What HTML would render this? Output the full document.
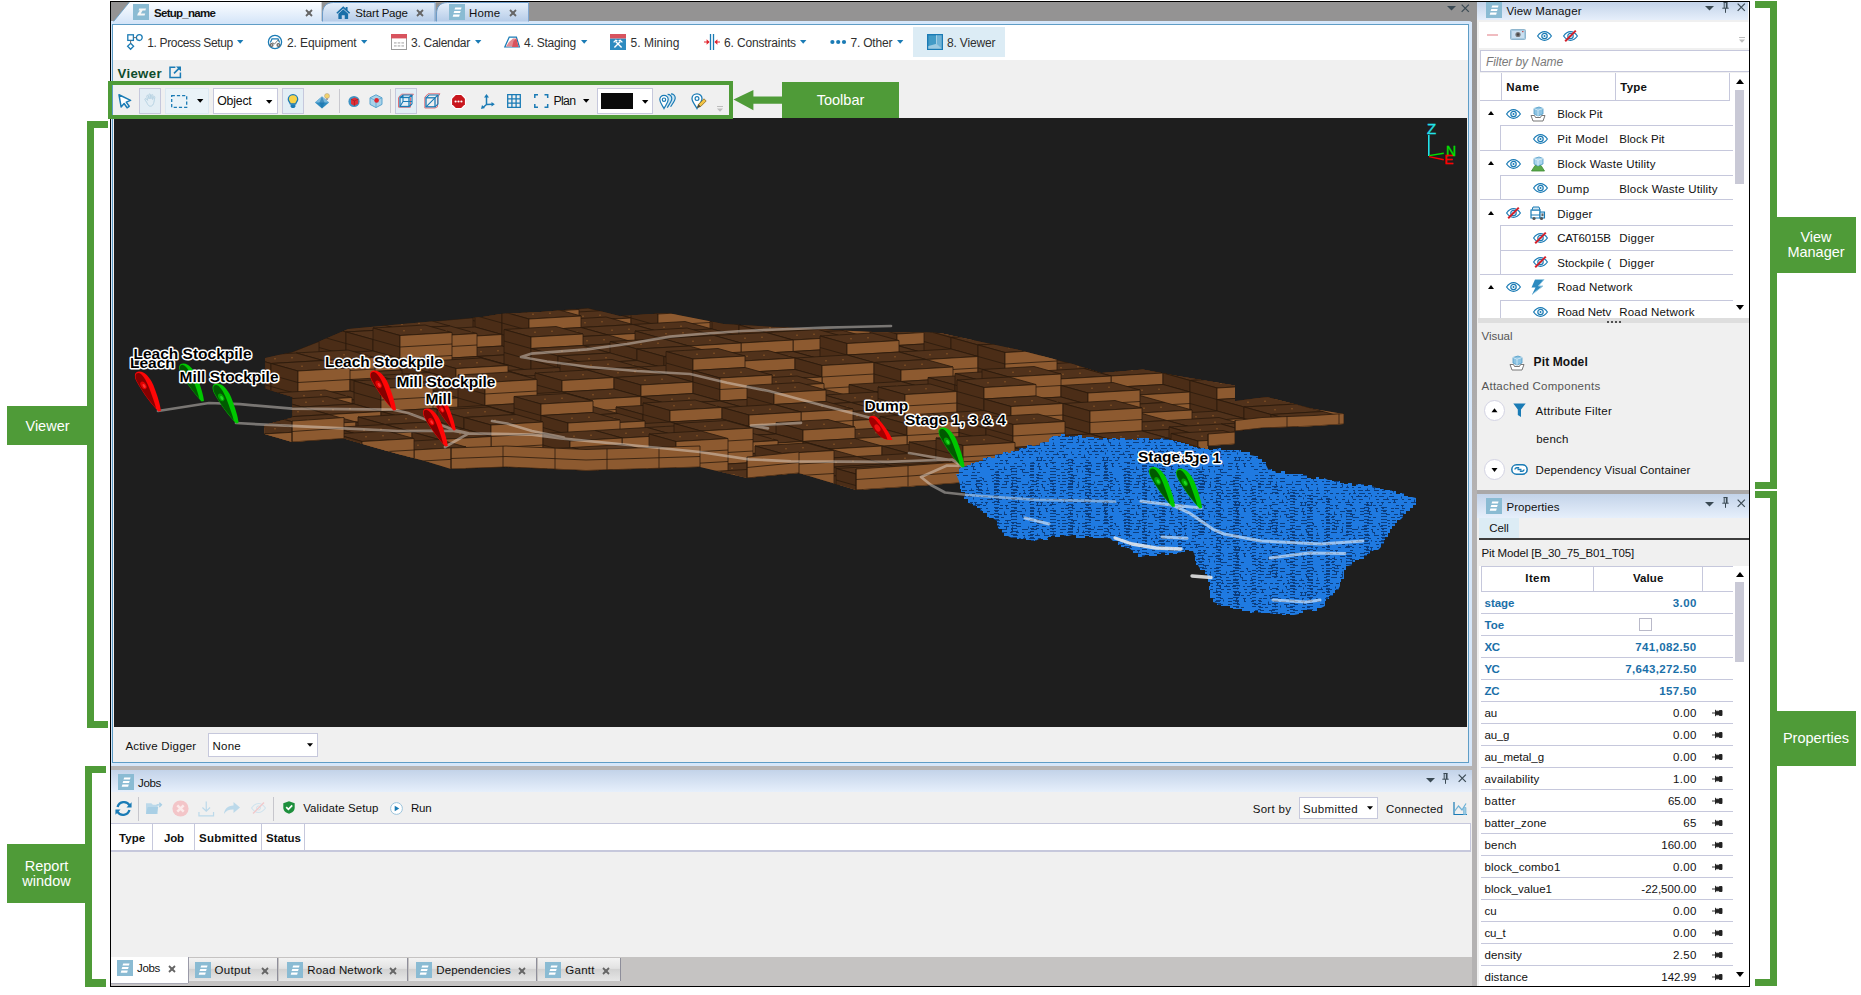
<!DOCTYPE html>
<html><head><meta charset="utf-8"><title>Viewer</title>
<style>
*{box-sizing:border-box;margin:0;padding:0}
html,body{width:1861px;height:995px;overflow:hidden;background:#fff}
body{position:relative;font:11.5px "Liberation Sans",sans-serif;color:#101010}
.a,.a>*{position:absolute}
.t{white-space:nowrap;line-height:14px;height:14px}
.b{font-weight:700;letter-spacing:-.55px}
.g{background:#4f9b38}
.lbl{background:#4f9b38;color:#fff;font-size:14.5px;line-height:15px;text-align:center;display:flex;align-items:center;justify-content:center;white-space:nowrap}
.hd{background:linear-gradient(#c3d3e9,#e6effb)}
svg{position:absolute;overflow:visible}
.ic{background:#8abbd3}
</style></head><body>

<!-- ============ APP FRAME ============ -->
<div class="a" id="app" style="left:0;top:0;width:1861px;height:995px">
<div style="left:110px;top:1px;width:1640px;height:986px;background:#000"></div>
<div style="left:111px;top:2px;width:1638px;height:984px;background:#f0f0f0"></div>
<!-- doc tab strip -->
<div style="left:111px;top:2px;width:1366px;height:20px;background:#949393"></div>
<!-- vertical gray splitter -->
<div style="left:1472px;top:2px;width:5px;height:984px;background:linear-gradient(#949393,#949393 6%,#b4b2b2 50%)"></div>
<!-- doc frame -->
<div style="left:111px;top:21px;width:1361px;height:745px;background:#d6e7fa;border-radius:0 3px 0 0"></div>
<div style="left:112px;top:24px;width:1357px;height:739px;background:#5f9dc6"></div>
<div style="left:113px;top:25px;width:1355px;height:737px;background:#f0f0f0"></div>
<!-- menu bar white -->
<div style="left:113px;top:25px;width:1355px;height:35px;background:#fff"></div>
<!-- 3D view -->
<div style="left:114px;top:118px;width:1353px;height:609px;background:#1e1e1e"></div>
<!-- horizontal splitter under doc -->
<div style="left:111px;top:766px;width:1361px;height:4px;background:#b6b4b4"></div>
</div>

<!--VIEW3D-->
<div class="a" id="v3d" style="left:0;top:0">
<svg style="left:114px;top:118px" width="1353" height="609" viewBox="114 118 1353 609">
<defs>
<clipPath id="cp"><polygon points="265,358 292,352 320,341 348,329 402,324 482,317 500,314 540,312 588,308 620,316 668,313 724,324 775,327 873,332 940,333 1019,350 1073,364 1101,373 1143,369.5 1178,376 1235,385.5 1235,401 1267,397 1314,409 1344,414 1344,424 1314,426 1262,428 1235,431 1235,444 1208,446 1208,470 1000,480 957,483 910,486.5 856,490 799,473 747,478 700,467 586,470.5 506,467 451,469 425,461 398,454 371,446.5 344,438.5 292,442 264.5,434 264.5,425 292.5,417.5 292.5,397 265.4,388.7"/></clipPath>
<clipPath id="cb"><polygon points="956,474 959,474 959,469 963,466 967,466 967,465 971,465 971,463 975,463 975,462 979,462 979,461 983,461 983,458 987,458 987,457 991,457 991,458 995,458 995,455 999,454 1003,454 1003,452 1008,452 1008,453 1011,453 1011,451 1016,451 1016,451 1019,451 1019,448 1024,448 1024,448 1027,448 1027,445 1032,445 1032,446 1036,446 1036,445 1040,445 1040,443 1044,442 1049,442 1049,439 1053,436 1057,436 1057,436 1061,436 1061,434 1065,434 1065,437 1069,437 1069,436 1074,436 1074,436 1078,436 1078,435 1082,435 1082,438 1086,438 1086,437 1090,437 1094,437 1094,438 1099,438 1099,439 1103,439 1103,438 1107,438 1107,439 1112,439 1112,438 1116,438 1116,439 1120,439 1120,438 1125,438 1125,440 1129,439 1133,439 1133,440 1137,440 1137,438 1141,438 1141,438 1145,438 1145,438 1149,438 1149,440 1153,440 1153,439 1157,439 1157,439 1161,439 1161,438 1165,439 1169,439 1169,440 1173,440 1173,441 1177,441 1177,442 1181,442 1181,443 1185,443 1185,444 1189,444 1189,446 1193,446 1193,447 1197,447 1197,448 1201,448 1205,448 1205,449 1209,449 1209,450 1213,450 1213,449 1217,449 1217,448 1221,448 1221,450 1225,450 1225,450 1229,450 1229,450 1233,450 1233,450 1237,450 1241,450 1241,452 1246,452 1246,452 1250,452 1250,455 1255,456 1258,456 1258,459 1262,459 1262,462 1266,462 1266,465 1268,469 1272,469 1272,471 1276,471 1276,473 1281,473 1281,471 1285,471 1285,474 1290,474 1294,474 1294,474 1299,474 1299,474 1303,474 1303,475 1307,475 1307,478 1311,478 1311,479 1316,479 1316,477 1319,477 1319,479 1324,479 1324,478 1328,480 1332,480 1332,481 1336,481 1336,481 1340,481 1340,483 1344,483 1344,484 1348,484 1348,483 1352,483 1352,486 1356,486 1356,484 1360,484 1360,484 1364,484 1364,486 1368,486 1368,485 1372,485 1372,486 1376,488 1380,488 1380,489 1384,489 1384,490 1388,490 1388,490 1392,490 1392,491 1396,491 1396,494 1400,494 1400,493 1404,493 1404,496 1408,496 1408,497 1412,497 1412,497 1416,498 1416,505 1413,505 1413,508 1410,508 1410,511 1406,511 1406,514 1403,514 1403,517 1400,520 1397,520 1397,523 1395,523 1395,526 1392,526 1392,529 1390,529 1390,533 1388,533 1388,537 1385,537 1385,540 1384,540 1384,544 1381,544 1381,547 1378,550 1374,550 1374,551 1370,551 1370,554 1367,554 1367,556 1364,556 1364,559 1359,559 1359,560 1355,560 1355,562 1352,562 1352,565 1348,566 1346,566 1346,570 1344,570 1344,574 1344,574 1344,579 1341,579 1341,582 1340,582 1340,586 1338,590 1335,590 1335,593 1333,593 1333,596 1329,596 1329,599 1326,599 1326,601 1325,601 1325,606 1321,608 1317,608 1317,611 1312,611 1312,610 1307,610 1307,610 1303,610 1303,613 1299,613 1299,614 1294,615 1290,615 1290,614 1286,614 1286,615 1282,615 1282,614 1278,614 1278,614 1274,614 1274,614 1270,614 1270,613 1266,613 1266,613 1262,613 1262,613 1258,613 1258,611 1254,611 1254,613 1250,613 1250,611 1246,611 1242,611 1242,609 1238,609 1238,609 1233,609 1233,608 1230,608 1230,606 1225,606 1225,606 1221,606 1221,605 1217,605 1217,603 1213,602 1213,602 1213,598 1210,598 1210,594 1210,594 1210,590 1209,590 1209,586 1210,586 1210,582 1208,582 1208,578 1207,574 1205,574 1205,570 1200,570 1200,569 1198,565 1196,565 1196,561 1195,561 1195,556 1193,551 1189,551 1189,550 1185,550 1185,552 1181,552 1181,553 1177,553 1177,554 1173,554 1173,553 1169,553 1169,555 1165,555 1165,553 1161,553 1161,554 1157,554 1157,556 1153,556 1153,556 1149,556 1149,555 1145,555 1145,556 1141,557 1138,557 1138,553 1133,553 1133,551 1129,548 1125,548 1125,547 1121,547 1121,545 1118,545 1118,541 1113,541 1113,541 1110,538 1106,538 1106,538 1102,538 1102,538 1097,538 1097,538 1093,538 1093,537 1089,537 1089,536 1085,536 1085,538 1081,538 1081,538 1076,538 1076,535 1072,535 1072,535 1068,536 1064,536 1064,535 1060,535 1060,537 1055,537 1055,536 1051,536 1051,537 1048,537 1048,540 1043,540 1043,539 1039,539 1039,539 1035,541 1031,541 1031,540 1026,540 1026,539 1021,539 1021,539 1017,539 1017,538 1012,538 1012,538 1008,536 1004,536 1004,533 1002,533 1002,529 998,529 998,526 997,526 997,521 993,518 989,518 989,517 987,517 987,513 983,513 983,511 980,511 980,508 977,508 977,506 973,506 973,504 969,503 968,503 968,499 964,499 964,496 965,496 965,492 961,492 961,489 960,489 960,485 959,481"/></clipPath>
<pattern id="pt" width="66" height="45" patternUnits="userSpaceOnUse"><rect width="66" height="45" fill="#1f7ae1"/><path d="M3 1.5h5M15.5 1.5v2M23 1.5h2M31 1.5h2M32.5 1.5v2M36 1.5h6M38.5 1.5v-2M44 1.5h4M45.5 1.5v-2M51.5 1.5v-2M55 1.5h2M59 1.5h5M0 4.5h3M1.5 4.5v-2M6 4.5h6M8.5 4.5v3M16 4.5h2M22 4.5h3M28.5 4.5v3M33 4.5h3M39 4.5h4M49.5 4.5v-2M56 4.5h3M63 4.5h6M2 7.5h3M7 7.5h3M18 7.5h3M25 7.5h5M32 7.5h2M39 7.5h2M46 7.5h3M47.5 7.5v3M50 7.5h3M51.5 7.5v3M57 7.5h2M61 7.5h3M62.5 7.5v2M10 10.5h3M15 10.5h3M16.5 10.5v2M30 10.5h3M46 10.5h6M53 10.5h3M59 10.5h3M5 13.5h3M9 13.5h4M16 13.5h3M24 13.5h3M32 13.5h3M40 13.5h5M48 13.5h2M48.5 13.5v2M55 13.5h3M56.5 13.5v3M62 13.5h2M5 16.5h3M14.5 16.5v3M20 16.5h5M27 16.5h5M35.5 16.5v-2M40 16.5h4M47 16.5h4M49.5 16.5v3M56 16.5h2M63 16.5h6M0 19.5h4M8 19.5h4M14 19.5h3M20 19.5h2M30 19.5h5M32.5 19.5v3M40 19.5h4M49 19.5h3M5 22.5h4M11 22.5h3M21.5 22.5v-2M26.5 22.5v-2M33 22.5h6M48 22.5h3M53 22.5h3M1 25.5h3M6 25.5h4M15 25.5h6M17.5 25.5v2M33 25.5h2M39 25.5h5M47 25.5h6M2 28.5h2M6 28.5h6M14 28.5h5M22 28.5h2M26 28.5h5M47 28.5h6M58 28.5h2M59.5 28.5v2M2 31.5h2M6 31.5h4M14 31.5h5M16.5 31.5v3M22.5 31.5v2M26 31.5h5M38.5 31.5v2M42 31.5h5M52 31.5h4M60 31.5h3M4 34.5h6M12 34.5h5M21 34.5h2M22.5 34.5v3M32 34.5h6M41 34.5h6M51 34.5h2M52.5 34.5v3M57 34.5h2M62 34.5h2M4 37.5h3M11 37.5h6M20 37.5h2M26 37.5h3M27.5 37.5v-2M32 37.5h2M38 37.5h3M53 37.5h2M54.5 37.5v2M63.5 37.5v2M4 40.5h6M7.5 40.5v2M23 40.5h5M33 40.5h2M38 40.5h5M45 40.5h5M47.5 40.5v-2M54 40.5h5M62 40.5h3M4 43.5h2M10 43.5h3M16 43.5h3M21 43.5h4M29 43.5h2M29.5 43.5v2M33 43.5h3M34.5 43.5v-2M39 43.5h6M48 43.5h3M57 43.5h2M62 43.5h4" stroke="#0a3875" stroke-width="1" fill="none" opacity=".9"/></pattern>
<pattern id="pt2" width="74" height="42" patternUnits="userSpaceOnUse"><path d="M0 12.5h3M0 15.5h3M0 18.5h3M0 21.5h3M0 24.5h3M14 0.5h6M14 6.5h6M14 9.5h6M14 12.5h6M14 15.5h6M14 18.5h6M14 21.5h6M14 24.5h6M14 27.5h6M14 30.5h6M32 0.5h5M32 3.5h5M32 6.5h5M32 9.5h5M32 12.5h5M32 15.5h5M32 18.5h5M32 21.5h5M32 24.5h5M32 27.5h5M32 30.5h5M32 33.5h5M32 36.5h5M32 39.5h5M49 0.5h6M49 3.5h6M49 6.5h6M49 9.5h6M49 12.5h6M49 15.5h6M49 18.5h6M49 21.5h6M49 24.5h6M49 27.5h6M49 30.5h6M49 33.5h6M49 36.5h6M49 39.5h6M68 0.5h4M68 3.5h4M68 6.5h4M68 9.5h4M68 12.5h4M68 15.5h4M68 18.5h4M68 24.5h4M68 27.5h4M68 30.5h4M68 33.5h4M68 36.5h4M68 39.5h4" stroke="#0a3875" stroke-width="1" fill="none" opacity=".9"/></pattern>
</defs>
<style>.t{fill:#51321b}.s{fill:#4b2d17}.f{fill:#8d5a30}.d{stroke:#b87432;stroke-width:1}</style>
<g clip-path="url(#cp)" stroke="#2b1a0d" stroke-width=".8" stroke-linejoin="round"><polygon points="265,358 292,352 320,341 348,329 402,324 482,317 500,314 540,312 588,308 620,316 668,313 724,324 775,327 873,332 940,333 1019,350 1073,364 1101,373 1143,369.5 1178,376 1235,385.5 1235,401 1267,397 1314,409 1344,414 1344,424 1314,426 1262,428 1235,431 1235,444 1208,446 1208,470 1000,480 957,483 910,486.5 856,490 799,473 747,478 700,467 586,470.5 506,467 451,469 425,461 398,454 371,446.5 344,438.5 292,442 264.5,434 264.5,425 292.5,417.5 292.5,397 265.4,388.7" fill="#50321b"/><path class="t" d="M525 317.5l52 -3l27 7.5l-52 3z"/><path class="d" d="M555.5 320.2h1M572.5 319.2h1"/><path class="t" d="M473 309l52 -3l27 7.5l-52 3z"/><path class="d" d="M503.5 311.8h1M520.5 310.8h1"/><path class="s" d="M473 309l27 7.5v34.5l-27 -7.5zM473 320.5l27 7.5M473 332l27 7.5"/><path class="t" d="M604 310.5l52 -3l27 7.5l-52 3z"/><path class="d" d="M634.5 313.2h1M651.5 312.2h1"/><path class="t" d="M552 313.5l52 -3l27 7.5l-52 3z"/><path class="d" d="M582.5 316.2h1M599.5 315.2h1"/><path class="f" d="M579 321l52 -3v11.5l-52 3z"/><path class="t" d="M500 305l52 -3l27 7.5l-52 3z"/><path class="d" d="M530.5 307.8h1M547.5 306.8h1"/><path class="s" d="M500 305l27 7.5v23l-27 -7.5zM500 316.5l27 7.5"/><path class="f" d="M527 312.5l52 -3v23l-52 3zM527 324l52 -3"/><path class="t" d="M448 331l52 -3l27 7.5l-52 3z"/><path class="d" d="M478.5 333.8h1M495.5 332.8h1"/><path class="t" d="M396 334l52 -3l27 7.5l-52 3z"/><path class="d" d="M426.5 336.8h1M443.5 335.8h1"/><path class="s" d="M396 334l27 7.5v23l-27 -7.5zM396 345.5l27 7.5"/><path class="t" d="M787 320.5l52 -3l27 7.5l-52 3z"/><path class="d" d="M817.5 323.2h1M834.5 322.2h1"/><path class="s" d="M787 320.5l27 7.5v23l-27 -7.5zM787 332l27 7.5"/><path class="t" d="M631 306.5l52 -3l27 7.5l-52 3z"/><path class="d" d="M661.5 309.2h1M678.5 308.2h1"/><path class="s" d="M631 306.5l27 7.5v23l-27 -7.5zM631 318l27 7.5"/><path class="f" d="M658 314l52 -3v23l-52 3zM658 325.5l52 -3"/><path class="t" d="M579 332.5l52 -3l27 7.5l-52 3z"/><path class="d" d="M609.5 335.2h1M626.5 334.2h1"/><path class="t" d="M527 335.5l52 -3l27 7.5l-52 3z"/><path class="d" d="M557.5 338.2h1M574.5 337.2h1"/><path class="t" d="M475 304l52 -3l27 7.5l-52 3z"/><path class="d" d="M505.5 306.8h1M522.5 305.8h1"/><path class="s" d="M475 304l27 7.5v23l-27 -7.5zM475 315.5l27 7.5"/><path class="t" d="M423 330l52 -3l27 7.5l-52 3z"/><path class="d" d="M453.5 332.8h1M470.5 331.8h1"/><path class="f" d="M450 337.5l52 -3v11.5l-52 3z"/><path class="t" d="M371 321.5l52 -3l27 7.5l-52 3z"/><path class="d" d="M401.5 324.2h1M418.5 323.2h1"/><path class="t" d="M319 324.5l52 -3l27 7.5l-52 3z"/><path class="d" d="M349.5 327.2h1M366.5 326.2h1"/><path class="s" d="M319 324.5l27 7.5v46l-27 -7.5zM319 336l27 7.5M319 347.5l27 7.5M319 359l27 7.5"/><path class="t" d="M866 325l52 -3l27 7.5l-52 3z"/><path class="d" d="M896.5 327.8h1M913.5 326.8h1"/><path class="f" d="M893 332.5l52 -3v23l-52 3zM893 344l52 -3"/><path class="t" d="M814 328l52 -3l27 7.5l-52 3z"/><path class="d" d="M844.5 330.8h1M861.5 329.8h1"/><path class="s" d="M814 328l27 7.5v23l-27 -7.5zM814 339.5l27 7.5"/><path class="f" d="M841 335.5l52 -3v23l-52 3zM841 347l52 -3"/><path class="t" d="M658 337l52 -3l27 7.5l-52 3z"/><path class="d" d="M688.5 339.8h1M705.5 338.8h1"/><path class="t" d="M606 340l52 -3l27 7.5l-52 3z"/><path class="d" d="M636.5 342.8h1M653.5 341.8h1"/><path class="t" d="M554 320l52 -3l27 7.5l-52 3z"/><path class="d" d="M584.5 322.8h1M601.5 321.8h1"/><path class="t" d="M502 311.5l52 -3l27 7.5l-52 3z"/><path class="d" d="M532.5 314.2h1M549.5 313.2h1"/><path class="s" d="M502 311.5l27 7.5v34.5l-27 -7.5zM502 323l27 7.5M502 334.5l27 7.5"/><path class="f" d="M529 319l52 -3v11.5l-52 3z"/><path class="t" d="M450 349l52 -3l27 7.5l-52 3z"/><path class="d" d="M480.5 351.8h1M497.5 350.8h1"/><path class="t" d="M398 329l52 -3l27 7.5l-52 3z"/><path class="d" d="M428.5 331.8h1M445.5 330.8h1"/><path class="f" d="M425 336.5l52 -3v23l-52 3zM425 348l52 -3"/><path class="t" d="M346 332l52 -3l27 7.5l-52 3z"/><path class="d" d="M376.5 334.8h1M393.5 333.8h1"/><path class="s" d="M346 332l27 7.5v46l-27 -7.5zM346 343.5l27 7.5M346 355l27 7.5M346 366.5l27 7.5"/><path class="t" d="M685 333l52 -3l27 7.5l-52 3z"/><path class="d" d="M715.5 335.8h1M732.5 334.8h1"/><path class="t" d="M633 324.5l52 -3l27 7.5l-52 3z"/><path class="d" d="M663.5 327.2h1M680.5 326.2h1"/><path class="t" d="M581 327.5l52 -3l27 7.5l-52 3z"/><path class="d" d="M611.5 330.2h1M628.5 329.2h1"/><path class="f" d="M608 335l52 -3v23l-52 3zM608 346.5l52 -3"/><path class="t" d="M529 330.5l52 -3l27 7.5l-52 3z"/><path class="d" d="M559.5 333.2h1M576.5 332.2h1"/><path class="s" d="M529 330.5l27 7.5v23l-27 -7.5zM529 342l27 7.5"/><path class="t" d="M477 356.5l52 -3l27 7.5l-52 3z"/><path class="d" d="M507.5 359.2h1M524.5 358.2h1"/><path class="t" d="M425 359.5l52 -3l27 7.5l-52 3z"/><path class="d" d="M455.5 362.2h1M472.5 361.2h1"/><path class="t" d="M373 328l52 -3l27 7.5l-52 3z"/><path class="d" d="M403.5 330.8h1M420.5 329.8h1"/><path class="s" d="M373 328l27 7.5v23l-27 -7.5zM373 339.5l27 7.5"/><path class="f" d="M400 335.5l52 -3v34.5l-52 3zM400 347l52 -3M400 358.5l52 -3"/><path class="t" d="M321 354l52 -3l27 7.5l-52 3z"/><path class="d" d="M351.5 356.8h1M368.5 355.8h1"/><path class="s" d="M321 354l27 7.5v11.5l-27 -7.5z"/><path class="f" d="M348 361.5l52 -3v11.5l-52 3z"/><path class="t" d="M269 368.5l52 -3l27 7.5l-52 3z"/><path class="d" d="M299.5 371.2h1M316.5 370.2h1"/><path class="s" d="M269 368.5l27 7.5v23l-27 -7.5zM269 380l27 7.5"/><path class="t" d="M816 323l52 -3l27 7.5l-52 3z"/><path class="d" d="M846.5 325.8h1M863.5 324.8h1"/><path class="s" d="M816 323l27 7.5v23l-27 -7.5zM816 334.5l27 7.5"/><path class="f" d="M843 330.5l52 -3v23l-52 3zM843 342l52 -3"/><path class="t" d="M764 349l52 -3l27 7.5l-52 3z"/><path class="d" d="M794.5 351.8h1M811.5 350.8h1"/><path class="t" d="M712 317.5l52 -3l27 7.5l-52 3z"/><path class="d" d="M742.5 320.2h1M759.5 319.2h1"/><path class="s" d="M712 317.5l27 7.5v11.5l-27 -7.5z"/><path class="t" d="M660 332l52 -3l27 7.5l-52 3z"/><path class="d" d="M690.5 334.8h1M707.5 333.8h1"/><path class="s" d="M660 332l27 7.5v23l-27 -7.5zM660 343.5l27 7.5"/><path class="t" d="M608 358l52 -3l27 7.5l-52 3z"/><path class="d" d="M638.5 360.8h1M655.5 359.8h1"/><path class="t" d="M556 338l52 -3l27 7.5l-52 3z"/><path class="d" d="M586.5 340.8h1M603.5 339.8h1"/><path class="t" d="M504 329.5l52 -3l27 7.5l-52 3z"/><path class="d" d="M534.5 332.2h1M551.5 331.2h1"/><path class="s" d="M504 329.5l27 7.5v34.5l-27 -7.5zM504 341l27 7.5M504 352.5l27 7.5"/><path class="f" d="M531 337l52 -3v11.5l-52 3z"/><path class="t" d="M452 367l52 -3l27 7.5l-52 3z"/><path class="d" d="M482.5 369.8h1M499.5 368.8h1"/><path class="t" d="M400 370l52 -3l27 7.5l-52 3z"/><path class="d" d="M430.5 372.8h1M447.5 371.8h1"/><path class="t" d="M348 373l52 -3l27 7.5l-52 3z"/><path class="d" d="M378.5 375.8h1M395.5 374.8h1"/><path class="t" d="M296 353l52 -3l27 7.5l-52 3z"/><path class="d" d="M326.5 355.8h1M343.5 354.8h1"/><path class="f" d="M323 360.5l52 -3v23l-52 3zM323 372l52 -3"/><path class="t" d="M244 356l52 -3l27 7.5l-52 3z"/><path class="d" d="M274.5 358.8h1M291.5 357.8h1"/><path class="s" d="M244 356l27 7.5v46l-27 -7.5zM244 367.5l27 7.5M244 379l27 7.5M244 390.5l27 7.5"/><path class="t" d="M895 327.5l52 -3l27 7.5l-52 3z"/><path class="d" d="M925.5 330.2h1M942.5 329.2h1"/><path class="s" d="M895 327.5l27 7.5v23l-27 -7.5zM895 339l27 7.5"/><path class="f" d="M922 335l52 -3v46l-52 3zM922 346.5l52 -3M922 358l52 -3M922 369.5l52 -3"/><path class="t" d="M843 353.5l52 -3l27 7.5l-52 3z"/><path class="d" d="M873.5 356.2h1M890.5 355.2h1"/><path class="t" d="M791 333.5l52 -3l27 7.5l-52 3z"/><path class="d" d="M821.5 336.2h1M838.5 335.2h1"/><path class="f" d="M818 341l52 -3v46l-52 3zM818 352.5l52 -3M818 364l52 -3M818 375.5l52 -3"/><path class="t" d="M739 325l52 -3l27 7.5l-52 3z"/><path class="d" d="M769.5 327.8h1M786.5 326.8h1"/><path class="s" d="M739 325l27 7.5v11.5l-27 -7.5z"/><path class="t" d="M687 339.5l52 -3l27 7.5l-52 3z"/><path class="d" d="M717.5 342.2h1M734.5 341.2h1"/><path class="t" d="M635 331l52 -3l27 7.5l-52 3z"/><path class="d" d="M665.5 333.8h1M682.5 332.8h1"/><path class="s" d="M635 331l27 7.5v11.5l-27 -7.5z"/><path class="t" d="M583 345.5l52 -3l27 7.5l-52 3z"/><path class="d" d="M613.5 348.2h1M630.5 347.2h1"/><path class="t" d="M531 348.5l52 -3l27 7.5l-52 3z"/><path class="d" d="M561.5 351.2h1M578.5 350.2h1"/><path class="s" d="M531 348.5l27 7.5v23l-27 -7.5zM531 360l27 7.5"/><path class="t" d="M479 374.5l52 -3l27 7.5l-52 3z"/><path class="d" d="M509.5 377.2h1M526.5 376.2h1"/><path class="t" d="M427 366l52 -3l27 7.5l-52 3z"/><path class="d" d="M457.5 368.8h1M474.5 367.8h1"/><path class="s" d="M427 366l27 7.5v11.5l-27 -7.5z"/><path class="t" d="M375 380.5l52 -3l27 7.5l-52 3z"/><path class="d" d="M405.5 383.2h1M422.5 382.2h1"/><path class="t" d="M323 383.5l52 -3l27 7.5l-52 3z"/><path class="d" d="M353.5 386.2h1M370.5 385.2h1"/><path class="t" d="M271 363.5l52 -3l27 7.5l-52 3z"/><path class="d" d="M301.5 366.2h1M318.5 365.2h1"/><path class="s" d="M271 363.5l27 7.5v46l-27 -7.5zM271 375l27 7.5M271 386.5l27 7.5M271 398l27 7.5"/><path class="f" d="M298 371l52 -3v23l-52 3zM298 382.5l52 -3"/><path class="t" d="M870 326.5l52 -3l27 7.5l-52 3z"/><path class="d" d="M900.5 329.2h1M917.5 328.2h1"/><path class="s" d="M870 326.5l27 7.5v57.5l-27 -7.5zM870 338l27 7.5M870 349.5l27 7.5M870 361l27 7.5M870 372.5l27 7.5"/><path class="f" d="M897 334l52 -3v11.5l-52 3z"/><path class="t" d="M766 332.5l52 -3l27 7.5l-52 3z"/><path class="d" d="M796.5 335.2h1M813.5 334.2h1"/><path class="f" d="M793 340l52 -3v11.5l-52 3z"/><path class="t" d="M714 335.5l52 -3l27 7.5l-52 3z"/><path class="d" d="M744.5 338.2h1M761.5 337.2h1"/><path class="f" d="M741 343l52 -3v11.5l-52 3z"/><path class="t" d="M662 338.5l52 -3l27 7.5l-52 3z"/><path class="d" d="M692.5 341.2h1M709.5 340.2h1"/><path class="f" d="M689 346l52 -3v11.5l-52 3z"/><path class="t" d="M610 341.5l52 -3l27 7.5l-52 3z"/><path class="d" d="M640.5 344.2h1M657.5 343.2h1"/><path class="s" d="M610 341.5l27 7.5v11.5l-27 -7.5z"/><path class="t" d="M558 356l52 -3l27 7.5l-52 3z"/><path class="d" d="M588.5 358.8h1M605.5 357.8h1"/><path class="s" d="M558 356l27 7.5v11.5l-27 -7.5z"/><path class="t" d="M506 370.5l52 -3l27 7.5l-52 3z"/><path class="d" d="M536.5 373.2h1M553.5 372.2h1"/><path class="f" d="M533 378l52 -3v11.5l-52 3z"/><path class="t" d="M454 373.5l52 -3l27 7.5l-52 3z"/><path class="d" d="M484.5 376.2h1M501.5 375.2h1"/><path class="f" d="M481 381l52 -3v11.5l-52 3z"/><path class="t" d="M402 365l52 -3l27 7.5l-52 3z"/><path class="d" d="M432.5 367.8h1M449.5 366.8h1"/><path class="s" d="M402 365l27 7.5v11.5l-27 -7.5z"/><path class="t" d="M350 379.5l52 -3l27 7.5l-52 3z"/><path class="d" d="M380.5 382.2h1M397.5 381.2h1"/><path class="s" d="M350 379.5l27 7.5v11.5l-27 -7.5z"/><path class="t" d="M298 394l52 -3l27 7.5l-52 3z"/><path class="d" d="M328.5 396.8h1M345.5 395.8h1"/><path class="s" d="M298 394l27 7.5v23l-27 -7.5zM298 405.5l27 7.5"/><path class="t" d="M897 345.5l52 -3l27 7.5l-52 3z"/><path class="d" d="M927.5 348.2h1M944.5 347.2h1"/><path class="t" d="M845 348.5l52 -3l27 7.5l-52 3z"/><path class="d" d="M875.5 351.2h1M892.5 350.2h1"/><path class="f" d="M872 356l52 -3v46l-52 3zM872 367.5l52 -3M872 379l52 -3M872 390.5l52 -3"/><path class="t" d="M793 351.5l52 -3l27 7.5l-52 3z"/><path class="d" d="M823.5 354.2h1M840.5 353.2h1"/><path class="t" d="M741 354.5l52 -3l27 7.5l-52 3z"/><path class="d" d="M771.5 357.2h1M788.5 356.2h1"/><path class="t" d="M689 357.5l52 -3l27 7.5l-52 3z"/><path class="d" d="M719.5 360.2h1M736.5 359.2h1"/><path class="t" d="M637 349l52 -3l27 7.5l-52 3z"/><path class="d" d="M667.5 351.8h1M684.5 350.8h1"/><path class="s" d="M637 349l27 7.5v11.5l-27 -7.5z"/><path class="t" d="M585 363.5l52 -3l27 7.5l-52 3z"/><path class="d" d="M615.5 366.2h1M632.5 365.2h1"/><path class="s" d="M585 363.5l27 7.5v23l-27 -7.5zM585 375l27 7.5"/><path class="t" d="M533 389.5l52 -3l27 7.5l-52 3z"/><path class="d" d="M563.5 392.2h1M580.5 391.2h1"/><path class="t" d="M481 392.5l52 -3l27 7.5l-52 3z"/><path class="d" d="M511.5 395.2h1M528.5 394.2h1"/><path class="t" d="M429 361l52 -3l27 7.5l-52 3z"/><path class="d" d="M459.5 363.8h1M476.5 362.8h1"/><path class="s" d="M429 361l27 7.5v11.5l-27 -7.5z"/><path class="f" d="M456 368.5l52 -3v11.5l-52 3z"/><path class="t" d="M377 375.5l52 -3l27 7.5l-52 3z"/><path class="d" d="M407.5 378.2h1M424.5 377.2h1"/><path class="s" d="M377 375.5l27 7.5v23l-27 -7.5zM377 387l27 7.5"/><path class="t" d="M325 401.5l52 -3l27 7.5l-52 3z"/><path class="d" d="M355.5 404.2h1M372.5 403.2h1"/><path class="t" d="M273 393l52 -3l27 7.5l-52 3z"/><path class="d" d="M303.5 395.8h1M320.5 394.8h1"/><path class="s" d="M273 393l27 7.5v34.5l-27 -7.5zM273 404.5l27 7.5M273 416l27 7.5"/><path class="f" d="M300 400.5l52 -3v11.5l-52 3z"/><path class="t" d="M1080 367l52 -3l27 7.5l-52 3z"/><path class="d" d="M1110.5 369.8h1M1127.5 368.8h1"/><path class="t" d="M1028 370l52 -3l27 7.5l-52 3z"/><path class="d" d="M1058.5 372.8h1M1075.5 371.8h1"/><path class="t" d="M976 350l52 -3l27 7.5l-52 3z"/><path class="d" d="M1006.5 352.8h1M1023.5 351.8h1"/><path class="f" d="M1003 357.5l52 -3v46l-52 3zM1003 369l52 -3M1003 380.5l52 -3M1003 392l52 -3"/><path class="t" d="M924 330l52 -3l27 7.5l-52 3z"/><path class="d" d="M954.5 332.8h1M971.5 331.8h1"/><path class="s" d="M924 330l27 7.5v69l-27 -7.5zM924 341.5l27 7.5M924 353l27 7.5M924 364.5l27 7.5M924 376l27 7.5M924 387.5l27 7.5"/><path class="t" d="M820 336l52 -3l27 7.5l-52 3z"/><path class="d" d="M850.5 338.8h1M867.5 337.8h1"/><path class="s" d="M820 336l27 7.5v23l-27 -7.5zM820 347.5l27 7.5"/><path class="f" d="M847 343.5l52 -3v11.5l-52 3z"/><path class="t" d="M768 362l52 -3l27 7.5l-52 3z"/><path class="d" d="M798.5 364.8h1M815.5 363.8h1"/><path class="t" d="M716 353.5l52 -3l27 7.5l-52 3z"/><path class="d" d="M746.5 356.2h1M763.5 355.2h1"/><path class="f" d="M743 361l52 -3v11.5l-52 3z"/><path class="t" d="M664 356.5l52 -3l27 7.5l-52 3z"/><path class="d" d="M694.5 359.2h1M711.5 358.2h1"/><path class="s" d="M664 356.5l27 7.5v11.5l-27 -7.5z"/><path class="f" d="M691 364l52 -3v11.5l-52 3z"/><path class="t" d="M612 371l52 -3l27 7.5l-52 3z"/><path class="d" d="M642.5 373.8h1M659.5 372.8h1"/><path class="t" d="M560 362.5l52 -3l27 7.5l-52 3z"/><path class="d" d="M590.5 365.2h1M607.5 364.2h1"/><path class="s" d="M560 362.5l27 7.5v11.5l-27 -7.5z"/><path class="t" d="M508 377l52 -3l27 7.5l-52 3z"/><path class="d" d="M538.5 379.8h1M555.5 378.8h1"/><path class="t" d="M456 380l52 -3l27 7.5l-52 3z"/><path class="d" d="M486.5 382.8h1M503.5 381.8h1"/><path class="f" d="M483 387.5l52 -3v23l-52 3zM483 399l52 -3"/><path class="t" d="M404 383l52 -3l27 7.5l-52 3z"/><path class="d" d="M434.5 385.8h1M451.5 384.8h1"/><path class="s" d="M404 383l27 7.5v23l-27 -7.5zM404 394.5l27 7.5"/><path class="t" d="M352 409l52 -3l27 7.5l-52 3z"/><path class="d" d="M382.5 411.8h1M399.5 410.8h1"/><path class="t" d="M300 412l52 -3l27 7.5l-52 3z"/><path class="d" d="M330.5 414.8h1M347.5 413.8h1"/><path class="t" d="M248 415l52 -3l27 7.5l-52 3z"/><path class="d" d="M278.5 417.8h1M295.5 416.8h1"/><path class="s" d="M248 415l27 7.5v23l-27 -7.5zM248 426.5l27 7.5"/><path class="t" d="M1159 371.5l52 -3l27 7.5l-52 3z"/><path class="d" d="M1189.5 374.2h1M1206.5 373.2h1"/><path class="f" d="M1186 379l52 -3v23l-52 3zM1186 390.5l52 -3"/><path class="t" d="M1107 374.5l52 -3l27 7.5l-52 3z"/><path class="d" d="M1137.5 377.2h1M1154.5 376.2h1"/><path class="t" d="M1055 377.5l52 -3l27 7.5l-52 3z"/><path class="d" d="M1085.5 380.2h1M1102.5 379.2h1"/><path class="s" d="M1055 377.5l27 7.5v23l-27 -7.5zM1055 389l27 7.5"/><path class="f" d="M1082 385l52 -3v23l-52 3zM1082 396.5l52 -3"/><path class="t" d="M951 337.5l52 -3l27 7.5l-52 3z"/><path class="d" d="M981.5 340.2h1M998.5 339.2h1"/><path class="s" d="M951 337.5l27 7.5v11.5l-27 -7.5z"/><path class="t" d="M899 352l52 -3l27 7.5l-52 3z"/><path class="d" d="M929.5 354.8h1M946.5 353.8h1"/><path class="f" d="M926 359.5l52 -3v23l-52 3zM926 371l52 -3"/><path class="t" d="M847 355l52 -3l27 7.5l-52 3z"/><path class="d" d="M877.5 357.8h1M894.5 356.8h1"/><path class="t" d="M795 358l52 -3l27 7.5l-52 3z"/><path class="d" d="M825.5 360.8h1M842.5 359.8h1"/><path class="s" d="M795 358l27 7.5v11.5l-27 -7.5z"/><path class="f" d="M822 365.5l52 -3v34.5l-52 3zM822 377l52 -3M822 388.5l52 -3"/><path class="t" d="M743 372.5l52 -3l27 7.5l-52 3z"/><path class="d" d="M773.5 375.2h1M790.5 374.2h1"/><path class="f" d="M770 380l52 -3v11.5l-52 3z"/><path class="t" d="M691 375.5l52 -3l27 7.5l-52 3z"/><path class="d" d="M721.5 378.2h1M738.5 377.2h1"/><path class="t" d="M639 367l52 -3l27 7.5l-52 3z"/><path class="d" d="M669.5 369.8h1M686.5 368.8h1"/><path class="t" d="M587 370l52 -3l27 7.5l-52 3z"/><path class="d" d="M617.5 372.8h1M634.5 371.8h1"/><path class="t" d="M535 373l52 -3l27 7.5l-52 3z"/><path class="d" d="M565.5 375.8h1M582.5 374.8h1"/><path class="s" d="M535 373l27 7.5v34.5l-27 -7.5zM535 384.5l27 7.5M535 396l27 7.5"/><path class="f" d="M562 380.5l52 -3v11.5l-52 3z"/><path class="t" d="M483 410.5l52 -3l27 7.5l-52 3z"/><path class="d" d="M513.5 413.2h1M530.5 412.2h1"/><path class="t" d="M431 390.5l52 -3l27 7.5l-52 3z"/><path class="d" d="M461.5 393.2h1M478.5 392.2h1"/><path class="t" d="M379 393.5l52 -3l27 7.5l-52 3z"/><path class="d" d="M409.5 396.2h1M426.5 395.2h1"/><path class="s" d="M379 393.5l27 7.5v23l-27 -7.5zM379 405l27 7.5"/><path class="f" d="M406 401l52 -3v23l-52 3zM406 412.5l52 -3"/><path class="t" d="M327 419.5l52 -3l27 7.5l-52 3z"/><path class="d" d="M357.5 422.2h1M374.5 421.2h1"/><path class="t" d="M275 399.5l52 -3l27 7.5l-52 3z"/><path class="d" d="M305.5 402.2h1M322.5 401.2h1"/><path class="s" d="M275 399.5l27 7.5v46l-27 -7.5zM275 411l27 7.5M275 422.5l27 7.5M275 434l27 7.5"/><path class="t" d="M1134 382l52 -3l27 7.5l-52 3z"/><path class="d" d="M1164.5 384.8h1M1181.5 383.8h1"/><path class="s" d="M1134 382l27 7.5v23l-27 -7.5zM1134 393.5l27 7.5"/><path class="f" d="M1161 389.5l52 -3v23l-52 3zM1161 401l52 -3"/><path class="t" d="M1030 365l52 -3l27 7.5l-52 3z"/><path class="d" d="M1060.5 367.8h1M1077.5 366.8h1"/><path class="t" d="M978 345l52 -3l27 7.5l-52 3z"/><path class="d" d="M1008.5 347.8h1M1025.5 346.8h1"/><path class="s" d="M978 345l27 7.5v34.5l-27 -7.5zM978 356.5l27 7.5M978 368l27 7.5"/><path class="f" d="M1005 352.5l52 -3v23l-52 3zM1005 364l52 -3"/><path class="t" d="M926 382.5l52 -3l27 7.5l-52 3z"/><path class="d" d="M956.5 385.2h1M973.5 384.2h1"/><path class="t" d="M874 362.5l52 -3l27 7.5l-52 3z"/><path class="d" d="M904.5 365.2h1M921.5 364.2h1"/><path class="s" d="M874 362.5l27 7.5v34.5l-27 -7.5zM874 374l27 7.5M874 385.5l27 7.5"/><path class="f" d="M901 370l52 -3v11.5l-52 3z"/><path class="t" d="M822 400l52 -3l27 7.5l-52 3z"/><path class="d" d="M852.5 402.8h1M869.5 401.8h1"/><path class="t" d="M770 391.5l52 -3l27 7.5l-52 3z"/><path class="d" d="M800.5 394.2h1M817.5 393.2h1"/><path class="t" d="M718 383l52 -3l27 7.5l-52 3z"/><path class="d" d="M748.5 385.8h1M765.5 384.8h1"/><path class="t" d="M666 351.5l52 -3l27 7.5l-52 3z"/><path class="d" d="M696.5 354.2h1M713.5 353.2h1"/><path class="s" d="M666 351.5l27 7.5v23l-27 -7.5zM666 363l27 7.5"/><path class="f" d="M693 359l52 -3v11.5l-52 3z"/><path class="t" d="M614 377.5l52 -3l27 7.5l-52 3z"/><path class="d" d="M644.5 380.2h1M661.5 379.2h1"/><path class="s" d="M614 377.5l27 7.5v11.5l-27 -7.5z"/><path class="f" d="M641 385l52 -3v11.5l-52 3z"/><path class="t" d="M562 392l52 -3l27 7.5l-52 3z"/><path class="d" d="M592.5 394.8h1M609.5 393.8h1"/><path class="f" d="M589 399.5l52 -3v23l-52 3zM589 411l52 -3"/><path class="t" d="M510 395l52 -3l27 7.5l-52 3z"/><path class="d" d="M540.5 397.8h1M557.5 396.8h1"/><path class="f" d="M537 402.5l52 -3v23l-52 3zM537 414l52 -3"/><path class="t" d="M458 375l52 -3l27 7.5l-52 3z"/><path class="d" d="M488.5 377.8h1M505.5 376.8h1"/><path class="s" d="M458 375l27 7.5v46l-27 -7.5zM458 386.5l27 7.5M458 398l27 7.5M458 409.5l27 7.5"/><path class="f" d="M485 382.5l52 -3v23l-52 3zM485 394l52 -3"/><path class="t" d="M406 424l52 -3l27 7.5l-52 3z"/><path class="d" d="M436.5 426.8h1M453.5 425.8h1"/><path class="t" d="M354 381l52 -3l27 7.5l-52 3z"/><path class="d" d="M384.5 383.8h1M401.5 382.8h1"/><path class="s" d="M354 381l27 7.5v23l-27 -7.5zM354 392.5l27 7.5"/><path class="f" d="M381 388.5l52 -3v23l-52 3zM381 400l52 -3"/><path class="t" d="M302 407l52 -3l27 7.5l-52 3z"/><path class="d" d="M332.5 409.8h1M349.5 408.8h1"/><path class="f" d="M329 414.5l52 -3v23l-52 3zM329 426l52 -3"/><path class="t" d="M250 410l52 -3l27 7.5l-52 3z"/><path class="d" d="M280.5 412.8h1M297.5 411.8h1"/><path class="s" d="M250 410l27 7.5v46l-27 -7.5zM250 421.5l27 7.5M250 433l27 7.5M250 444.5l27 7.5"/><path class="t" d="M1109 369.5l52 -3l27 7.5l-52 3z"/><path class="d" d="M1139.5 372.2h1M1156.5 371.2h1"/><path class="t" d="M1057 372.5l52 -3l27 7.5l-52 3z"/><path class="d" d="M1087.5 375.2h1M1104.5 374.2h1"/><path class="t" d="M1005 375.5l52 -3l27 7.5l-52 3z"/><path class="d" d="M1035.5 378.2h1M1052.5 377.2h1"/><path class="t" d="M953 378.5l52 -3l27 7.5l-52 3z"/><path class="d" d="M983.5 381.2h1M1000.5 380.2h1"/><path class="t" d="M901 381.5l52 -3l27 7.5l-52 3z"/><path class="d" d="M931.5 384.2h1M948.5 383.2h1"/><path class="t" d="M849 384.5l52 -3l27 7.5l-52 3z"/><path class="d" d="M879.5 387.2h1M896.5 386.2h1"/><path class="s" d="M849 384.5l27 7.5v11.5l-27 -7.5z"/><path class="t" d="M797 399l52 -3l27 7.5l-52 3z"/><path class="d" d="M827.5 401.8h1M844.5 400.8h1"/><path class="t" d="M745 379l52 -3l27 7.5l-52 3z"/><path class="d" d="M775.5 381.8h1M792.5 380.8h1"/><path class="f" d="M772 386.5l52 -3v11.5l-52 3z"/><path class="t" d="M693 370.5l52 -3l27 7.5l-52 3z"/><path class="d" d="M723.5 373.2h1M740.5 372.2h1"/><path class="s" d="M693 370.5l27 7.5v23l-27 -7.5zM693 382l27 7.5"/><path class="f" d="M720 378l52 -3v23l-52 3zM720 389.5l52 -3"/><path class="t" d="M641 396.5l52 -3l27 7.5l-52 3z"/><path class="d" d="M671.5 399.2h1M688.5 398.2h1"/><path class="s" d="M641 396.5l27 7.5v23l-27 -7.5zM641 408l27 7.5"/><path class="t" d="M589 422.5l52 -3l27 7.5l-52 3z"/><path class="d" d="M619.5 425.2h1M636.5 424.2h1"/><path class="t" d="M537 425.5l52 -3l27 7.5l-52 3z"/><path class="d" d="M567.5 428.2h1M584.5 427.2h1"/><path class="t" d="M485 405.5l52 -3l27 7.5l-52 3z"/><path class="d" d="M515.5 408.2h1M532.5 407.2h1"/><path class="t" d="M433 408.5l52 -3l27 7.5l-52 3z"/><path class="d" d="M463.5 411.2h1M480.5 410.2h1"/><path class="f" d="M460 416l52 -3v11.5l-52 3z"/><path class="t" d="M381 411.5l52 -3l27 7.5l-52 3z"/><path class="d" d="M411.5 414.2h1M428.5 413.2h1"/><path class="s" d="M381 411.5l27 7.5v23l-27 -7.5zM381 423l27 7.5"/><path class="t" d="M329 437.5l52 -3l27 7.5l-52 3z"/><path class="d" d="M359.5 440.2h1M376.5 439.2h1"/><path class="t" d="M277 417.5l52 -3l27 7.5l-52 3z"/><path class="d" d="M307.5 420.2h1M324.5 419.2h1"/><path class="f" d="M304 425l52 -3v46l-52 3zM304 436.5l52 -3M304 448l52 -3M304 459.5l52 -3"/><path class="t" d="M225 420.5l52 -3l27 7.5l-52 3z"/><path class="d" d="M255.5 423.2h1M272.5 422.2h1"/><path class="s" d="M225 420.5l27 7.5v46l-27 -7.5zM225 432l27 7.5M225 443.5l27 7.5M225 455l27 7.5"/><path class="f" d="M252 428l52 -3v46l-52 3zM252 439.5l52 -3M252 451l52 -3M252 462.5l52 -3"/><path class="t" d="M1188 385.5l52 -3l27 7.5l-52 3z"/><path class="d" d="M1218.5 388.2h1M1235.5 387.2h1"/><path class="t" d="M1136 377l52 -3l27 7.5l-52 3z"/><path class="d" d="M1166.5 379.8h1M1183.5 378.8h1"/><path class="t" d="M1084 368.5l52 -3l27 7.5l-52 3z"/><path class="d" d="M1114.5 371.2h1M1131.5 370.2h1"/><path class="f" d="M1111 376l52 -3v11.5l-52 3z"/><path class="t" d="M1032 371.5l52 -3l27 7.5l-52 3z"/><path class="d" d="M1062.5 374.2h1M1079.5 373.2h1"/><path class="f" d="M1059 379l52 -3v11.5l-52 3z"/><path class="t" d="M980 374.5l52 -3l27 7.5l-52 3z"/><path class="d" d="M1010.5 377.2h1M1027.5 376.2h1"/><path class="f" d="M1007 382l52 -3v11.5l-52 3z"/><path class="t" d="M928 377.5l52 -3l27 7.5l-52 3z"/><path class="d" d="M958.5 380.2h1M975.5 379.2h1"/><path class="s" d="M928 377.5l27 7.5v11.5l-27 -7.5z"/><path class="t" d="M876 392l52 -3l27 7.5l-52 3z"/><path class="d" d="M906.5 394.8h1M923.5 393.8h1"/><path class="f" d="M903 399.5l52 -3v23l-52 3zM903 411l52 -3"/><path class="t" d="M824 395l52 -3l27 7.5l-52 3z"/><path class="d" d="M854.5 397.8h1M871.5 396.8h1"/><path class="t" d="M772 398l52 -3l27 7.5l-52 3z"/><path class="d" d="M802.5 400.8h1M819.5 399.8h1"/><path class="t" d="M720 401l52 -3l27 7.5l-52 3z"/><path class="d" d="M750.5 403.8h1M767.5 402.8h1"/><path class="t" d="M668 404l52 -3l27 7.5l-52 3z"/><path class="d" d="M698.5 406.8h1M715.5 405.8h1"/><path class="t" d="M616 407l52 -3l27 7.5l-52 3z"/><path class="d" d="M646.5 409.8h1M663.5 408.8h1"/><path class="s" d="M616 407l27 7.5v11.5l-27 -7.5z"/><path class="t" d="M564 421.5l52 -3l27 7.5l-52 3z"/><path class="d" d="M594.5 424.2h1M611.5 423.2h1"/><path class="f" d="M591 429l52 -3v11.5l-52 3z"/><path class="t" d="M512 413l52 -3l27 7.5l-52 3z"/><path class="d" d="M542.5 415.8h1M559.5 414.8h1"/><path class="s" d="M512 413l27 7.5v11.5l-27 -7.5z"/><path class="t" d="M460 427.5l52 -3l27 7.5l-52 3z"/><path class="d" d="M490.5 430.2h1M507.5 429.2h1"/><path class="f" d="M487 435l52 -3v11.5l-52 3z"/><path class="t" d="M408 419l52 -3l27 7.5l-52 3z"/><path class="d" d="M438.5 421.8h1M455.5 420.8h1"/><path class="f" d="M435 426.5l52 -3v23l-52 3zM435 438l52 -3"/><path class="t" d="M356 422l52 -3l27 7.5l-52 3z"/><path class="d" d="M386.5 424.8h1M403.5 423.8h1"/><path class="s" d="M356 422l27 7.5v46l-27 -7.5zM356 433.5l27 7.5M356 445l27 7.5M356 456.5l27 7.5"/><path class="f" d="M383 429.5l52 -3v23l-52 3zM383 441l52 -3"/><path class="t" d="M1267 401.5l52 -3l27 7.5l-52 3z"/><path class="d" d="M1297.5 404.2h1M1314.5 403.2h1"/><path class="f" d="M1294 409l52 -3v23l-52 3zM1294 420.5l52 -3"/><path class="t" d="M1215 393l52 -3l27 7.5l-52 3z"/><path class="d" d="M1245.5 395.8h1M1262.5 394.8h1"/><path class="f" d="M1242 400.5l52 -3v11.5l-52 3z"/><path class="t" d="M1163 373l52 -3l27 7.5l-52 3z"/><path class="d" d="M1193.5 375.8h1M1210.5 374.8h1"/><path class="s" d="M1163 373l27 7.5v11.5l-27 -7.5z"/><path class="t" d="M1111 387.5l52 -3l27 7.5l-52 3z"/><path class="d" d="M1141.5 390.2h1M1158.5 389.2h1"/><path class="f" d="M1138 395l52 -3v23l-52 3zM1138 406.5l52 -3"/><path class="t" d="M1059 390.5l52 -3l27 7.5l-52 3z"/><path class="d" d="M1089.5 393.2h1M1106.5 392.2h1"/><path class="t" d="M1007 393.5l52 -3l27 7.5l-52 3z"/><path class="d" d="M1037.5 396.2h1M1054.5 395.2h1"/><path class="t" d="M955 373.5l52 -3l27 7.5l-52 3z"/><path class="d" d="M985.5 376.2h1M1002.5 375.2h1"/><path class="s" d="M955 373.5l27 7.5v46l-27 -7.5zM955 385l27 7.5M955 396.5l27 7.5M955 408l27 7.5"/><path class="t" d="M903 422.5l52 -3l27 7.5l-52 3z"/><path class="d" d="M933.5 425.2h1M950.5 424.2h1"/><path class="t" d="M851 402.5l52 -3l27 7.5l-52 3z"/><path class="d" d="M881.5 405.2h1M898.5 404.2h1"/><path class="t" d="M799 405.5l52 -3l27 7.5l-52 3z"/><path class="d" d="M829.5 408.2h1M846.5 407.2h1"/><path class="t" d="M747 385.5l52 -3l27 7.5l-52 3z"/><path class="d" d="M777.5 388.2h1M794.5 387.2h1"/><path class="s" d="M747 385.5l27 7.5v23l-27 -7.5zM747 397l27 7.5"/><path class="f" d="M774 393l52 -3v11.5l-52 3z"/><path class="t" d="M695 411.5l52 -3l27 7.5l-52 3z"/><path class="d" d="M725.5 414.2h1M742.5 413.2h1"/><path class="t" d="M643 403l52 -3l27 7.5l-52 3z"/><path class="d" d="M673.5 405.8h1M690.5 404.8h1"/><path class="s" d="M643 403l27 7.5v34.5l-27 -7.5zM643 414.5l27 7.5M643 426l27 7.5"/><path class="f" d="M670 410.5l52 -3v11.5l-52 3z"/><path class="t" d="M591 440.5l52 -3l27 7.5l-52 3z"/><path class="d" d="M621.5 443.2h1M638.5 442.2h1"/><path class="t" d="M539 409l52 -3l27 7.5l-52 3z"/><path class="d" d="M569.5 411.8h1M586.5 410.8h1"/><path class="s" d="M539 409l27 7.5v34.5l-27 -7.5zM539 420.5l27 7.5M539 432l27 7.5"/><path class="t" d="M487 446.5l52 -3l27 7.5l-52 3z"/><path class="d" d="M517.5 449.2h1M534.5 448.2h1"/><path class="t" d="M435 449.5l52 -3l27 7.5l-52 3z"/><path class="d" d="M465.5 452.2h1M482.5 451.2h1"/><path class="t" d="M383 452.5l52 -3l27 7.5l-52 3z"/><path class="d" d="M413.5 455.2h1M430.5 454.2h1"/><path class="s" d="M383 452.5l27 7.5v23l-27 -7.5zM383 464l27 7.5"/><path class="t" d="M227 427l52 -3l27 7.5l-52 3z"/><path class="d" d="M257.5 429.8h1M274.5 428.8h1"/><path class="s" d="M227 427l27 7.5v57.5l-27 -7.5zM227 438.5l27 7.5M227 450l27 7.5M227 461.5l27 7.5M227 473l27 7.5"/><path class="f" d="M254 434.5l52 -3v57.5l-52 3zM254 446l52 -3M254 457.5l52 -3M254 469l52 -3M254 480.5l52 -3"/><path class="t" d="M1242 412l52 -3l27 7.5l-52 3z"/><path class="d" d="M1272.5 414.8h1M1289.5 413.8h1"/><path class="f" d="M1269 419.5l52 -3v23l-52 3zM1269 431l52 -3"/><path class="t" d="M1190 380.5l52 -3l27 7.5l-52 3z"/><path class="d" d="M1220.5 383.2h1M1237.5 382.2h1"/><path class="s" d="M1190 380.5l27 7.5v34.5l-27 -7.5zM1190 392l27 7.5M1190 403.5l27 7.5"/><path class="f" d="M1217 388l52 -3v11.5l-52 3z"/><path class="t" d="M1138 418l52 -3l27 7.5l-52 3z"/><path class="d" d="M1168.5 420.8h1M1185.5 419.8h1"/><path class="t" d="M1086 398l52 -3l27 7.5l-52 3z"/><path class="d" d="M1116.5 400.8h1M1133.5 399.8h1"/><path class="t" d="M1034 401l52 -3l27 7.5l-52 3z"/><path class="d" d="M1064.5 403.8h1M1081.5 402.8h1"/><path class="t" d="M982 369.5l52 -3l27 7.5l-52 3z"/><path class="d" d="M1012.5 372.2h1M1029.5 371.2h1"/><path class="s" d="M982 369.5l27 7.5v34.5l-27 -7.5zM982 381l27 7.5M982 392.5l27 7.5"/><path class="f" d="M1009 377l52 -3v23l-52 3zM1009 388.5l52 -3"/><path class="t" d="M930 407l52 -3l27 7.5l-52 3z"/><path class="d" d="M960.5 409.8h1M977.5 408.8h1"/><path class="t" d="M878 387l52 -3l27 7.5l-52 3z"/><path class="d" d="M908.5 389.8h1M925.5 388.8h1"/><path class="s" d="M878 387l27 7.5v23l-27 -7.5zM878 398.5l27 7.5"/><path class="f" d="M905 394.5l52 -3v23l-52 3zM905 406l52 -3"/><path class="t" d="M826 413l52 -3l27 7.5l-52 3z"/><path class="d" d="M856.5 415.8h1M873.5 414.8h1"/><path class="f" d="M853 420.5l52 -3v23l-52 3zM853 432l52 -3"/><path class="t" d="M774 404.5l52 -3l27 7.5l-52 3z"/><path class="d" d="M804.5 407.2h1M821.5 406.2h1"/><path class="f" d="M801 412l52 -3v34.5l-52 3zM801 423.5l52 -3M801 435l52 -3"/><path class="t" d="M722 407.5l52 -3l27 7.5l-52 3z"/><path class="d" d="M752.5 410.2h1M769.5 409.2h1"/><path class="s" d="M722 407.5l27 7.5v11.5l-27 -7.5z"/><path class="f" d="M749 415l52 -3v11.5l-52 3z"/><path class="t" d="M670 422l52 -3l27 7.5l-52 3z"/><path class="d" d="M700.5 424.8h1M717.5 423.8h1"/><path class="t" d="M618 425l52 -3l27 7.5l-52 3z"/><path class="d" d="M648.5 427.8h1M665.5 426.8h1"/><path class="f" d="M645 432.5l52 -3v11.5l-52 3z"/><path class="t" d="M566 416.5l52 -3l27 7.5l-52 3z"/><path class="d" d="M596.5 419.2h1M613.5 418.2h1"/><path class="f" d="M593 424l52 -3v11.5l-52 3z"/><path class="t" d="M514 396.5l52 -3l27 7.5l-52 3z"/><path class="d" d="M544.5 399.2h1M561.5 398.2h1"/><path class="s" d="M514 396.5l27 7.5v23l-27 -7.5zM514 408l27 7.5"/><path class="f" d="M541 404l52 -3v11.5l-52 3z"/><path class="t" d="M462 422.5l52 -3l27 7.5l-52 3z"/><path class="d" d="M492.5 425.2h1M509.5 424.2h1"/><path class="s" d="M462 422.5l27 7.5v11.5l-27 -7.5z"/><path class="f" d="M489 430l52 -3v11.5l-52 3z"/><path class="t" d="M410 437l52 -3l27 7.5l-52 3z"/><path class="d" d="M440.5 439.8h1M457.5 438.8h1"/><path class="t" d="M358 417l52 -3l27 7.5l-52 3z"/><path class="d" d="M388.5 419.8h1M405.5 418.8h1"/><path class="s" d="M358 417l27 7.5v11.5l-27 -7.5z"/><path class="t" d="M306 431.5l52 -3l27 7.5l-52 3z"/><path class="d" d="M336.5 434.2h1M353.5 433.2h1"/><path class="s" d="M306 431.5l27 7.5v57.5l-27 -7.5zM306 443l27 7.5M306 454.5l27 7.5M306 466l27 7.5M306 477.5l27 7.5"/><path class="t" d="M1217 399.5l52 -3l27 7.5l-52 3z"/><path class="d" d="M1247.5 402.2h1M1264.5 401.2h1"/><path class="s" d="M1217 399.5l27 7.5v11.5l-27 -7.5z"/><path class="t" d="M1165 414l52 -3l27 7.5l-52 3z"/><path class="d" d="M1195.5 416.8h1M1212.5 415.8h1"/><path class="f" d="M1192 421.5l52 -3v11.5l-52 3z"/><path class="t" d="M1113 405.5l52 -3l27 7.5l-52 3z"/><path class="d" d="M1143.5 408.2h1M1160.5 407.2h1"/><path class="f" d="M1140 413l52 -3v11.5l-52 3z"/><path class="t" d="M1061 385.5l52 -3l27 7.5l-52 3z"/><path class="d" d="M1091.5 388.2h1M1108.5 387.2h1"/><path class="s" d="M1061 385.5l27 7.5v11.5l-27 -7.5z"/><path class="f" d="M1088 393l52 -3v23l-52 3zM1088 404.5l52 -3"/><path class="t" d="M1009 400l52 -3l27 7.5l-52 3z"/><path class="d" d="M1039.5 402.8h1M1056.5 401.8h1"/><path class="f" d="M1036 407.5l52 -3v11.5l-52 3z"/><path class="t" d="M957 380l52 -3l27 7.5l-52 3z"/><path class="d" d="M987.5 382.8h1M1004.5 381.8h1"/><path class="s" d="M957 380l27 7.5v34.5l-27 -7.5zM957 391.5l27 7.5M957 403l27 7.5"/><path class="f" d="M984 387.5l52 -3v11.5l-52 3z"/><path class="t" d="M905 417.5l52 -3l27 7.5l-52 3z"/><path class="d" d="M935.5 420.2h1M952.5 419.2h1"/><path class="s" d="M905 417.5l27 7.5v23l-27 -7.5zM905 429l27 7.5"/><path class="t" d="M853 443.5l52 -3l27 7.5l-52 3z"/><path class="d" d="M883.5 446.2h1M900.5 445.2h1"/><path class="t" d="M801 446.5l52 -3l27 7.5l-52 3z"/><path class="d" d="M831.5 449.2h1M848.5 448.2h1"/><path class="t" d="M749 426.5l52 -3l27 7.5l-52 3z"/><path class="d" d="M779.5 429.2h1M796.5 428.2h1"/><path class="t" d="M697 429.5l52 -3l27 7.5l-52 3z"/><path class="d" d="M727.5 432.2h1M744.5 431.2h1"/><path class="s" d="M697 429.5l27 7.5v11.5l-27 -7.5z"/><path class="t" d="M645 444l52 -3l27 7.5l-52 3z"/><path class="d" d="M675.5 446.8h1M692.5 445.8h1"/><path class="t" d="M593 435.5l52 -3l27 7.5l-52 3z"/><path class="d" d="M623.5 438.2h1M640.5 437.2h1"/><path class="t" d="M541 415.5l52 -3l27 7.5l-52 3z"/><path class="d" d="M571.5 418.2h1M588.5 417.2h1"/><path class="s" d="M541 415.5l27 7.5v23l-27 -7.5zM541 427l27 7.5"/><path class="f" d="M568 423l52 -3v23l-52 3zM568 434.5l52 -3"/><path class="t" d="M489 441.5l52 -3l27 7.5l-52 3z"/><path class="d" d="M519.5 444.2h1M536.5 443.2h1"/><path class="t" d="M437 410l52 -3l27 7.5l-52 3z"/><path class="d" d="M467.5 412.8h1M484.5 411.8h1"/><path class="s" d="M437 410l27 7.5v11.5l-27 -7.5z"/><path class="t" d="M385 424.5l52 -3l27 7.5l-52 3z"/><path class="d" d="M415.5 427.2h1M432.5 426.2h1"/><path class="t" d="M333 427.5l52 -3l27 7.5l-52 3z"/><path class="d" d="M363.5 430.2h1M380.5 429.2h1"/><path class="s" d="M333 427.5l27 7.5v69l-27 -7.5zM333 439l27 7.5M333 450.5l27 7.5M333 462l27 7.5M333 473.5l27 7.5M333 485l27 7.5"/><path class="f" d="M360 435l52 -3v69l-52 3zM360 446.5l52 -3M360 458l52 -3M360 469.5l52 -3M360 481l52 -3M360 492.5l52 -3"/><path class="t" d="M1244 407l52 -3l27 7.5l-52 3z"/><path class="d" d="M1274.5 409.8h1M1291.5 408.8h1"/><path class="s" d="M1244 407l27 7.5v23l-27 -7.5zM1244 418.5l27 7.5"/><path class="t" d="M1192 433l52 -3l27 7.5l-52 3z"/><path class="d" d="M1222.5 435.8h1M1239.5 434.8h1"/><path class="f" d="M1219 440.5l52 -3v23l-52 3zM1219 452l52 -3"/><path class="t" d="M1140 424.5l52 -3l27 7.5l-52 3z"/><path class="d" d="M1170.5 427.2h1M1187.5 426.2h1"/><path class="t" d="M1088 416l52 -3l27 7.5l-52 3z"/><path class="d" d="M1118.5 418.8h1M1135.5 417.8h1"/><path class="t" d="M1036 419l52 -3l27 7.5l-52 3z"/><path class="d" d="M1066.5 421.8h1M1083.5 420.8h1"/><path class="t" d="M984 399l52 -3l27 7.5l-52 3z"/><path class="d" d="M1014.5 401.8h1M1031.5 400.8h1"/><path class="s" d="M984 399l27 7.5v11.5l-27 -7.5z"/><path class="f" d="M1011 406.5l52 -3v23l-52 3zM1011 418l52 -3"/><path class="t" d="M932 413.5l52 -3l27 7.5l-52 3z"/><path class="d" d="M962.5 416.2h1M979.5 415.2h1"/><path class="t" d="M880 416.5l52 -3l27 7.5l-52 3z"/><path class="d" d="M910.5 419.2h1M927.5 418.2h1"/><path class="s" d="M880 416.5l27 7.5v11.5l-27 -7.5z"/><path class="f" d="M907 424l52 -3v34.5l-52 3zM907 435.5l52 -3M907 447l52 -3"/><path class="t" d="M828 431l52 -3l27 7.5l-52 3z"/><path class="d" d="M858.5 433.8h1M875.5 432.8h1"/><path class="f" d="M855 438.5l52 -3v23l-52 3zM855 450l52 -3"/><path class="t" d="M776 422.5l52 -3l27 7.5l-52 3z"/><path class="d" d="M806.5 425.2h1M823.5 424.2h1"/><path class="s" d="M776 422.5l27 7.5v11.5l-27 -7.5z"/><path class="f" d="M803 430l52 -3v11.5l-52 3z"/><path class="t" d="M724 437l52 -3l27 7.5l-52 3z"/><path class="d" d="M754.5 439.8h1M771.5 438.8h1"/><path class="f" d="M751 444.5l52 -3v23l-52 3zM751 456l52 -3"/><path class="t" d="M672 440l52 -3l27 7.5l-52 3z"/><path class="d" d="M702.5 442.8h1M719.5 441.8h1"/><path class="t" d="M620 443l52 -3l27 7.5l-52 3z"/><path class="d" d="M650.5 445.8h1M667.5 444.8h1"/><path class="t" d="M568 446l52 -3l27 7.5l-52 3z"/><path class="d" d="M598.5 448.8h1M615.5 447.8h1"/><path class="t" d="M516 449l52 -3l27 7.5l-52 3z"/><path class="d" d="M546.5 451.8h1M563.5 450.8h1"/><path class="t" d="M464 417.5l52 -3l27 7.5l-52 3z"/><path class="d" d="M494.5 420.2h1M511.5 419.2h1"/><path class="s" d="M464 417.5l27 7.5v11.5l-27 -7.5z"/><path class="f" d="M491 425l52 -3v34.5l-52 3zM491 436.5l52 -3M491 448l52 -3"/><path class="t" d="M412 432l52 -3l27 7.5l-52 3z"/><path class="d" d="M442.5 434.8h1M459.5 433.8h1"/><path class="s" d="M412 432l27 7.5v69l-27 -7.5zM412 443.5l27 7.5M412 455l27 7.5M412 466.5l27 7.5M412 478l27 7.5M412 489.5l27 7.5"/><path class="f" d="M439 439.5l52 -3v23l-52 3zM439 451l52 -3"/><path class="t" d="M1271 414.5l52 -3l27 7.5l-52 3z"/><path class="d" d="M1301.5 417.2h1M1318.5 416.2h1"/><path class="s" d="M1271 414.5l27 7.5v46l-27 -7.5zM1271 426l27 7.5M1271 437.5l27 7.5M1271 449l27 7.5"/><path class="f" d="M1298 422l52 -3v46l-52 3zM1298 433.5l52 -3M1298 445l52 -3M1298 456.5l52 -3"/><path class="t" d="M1167 420.5l52 -3l27 7.5l-52 3z"/><path class="d" d="M1197.5 423.2h1M1214.5 422.2h1"/><path class="t" d="M1115 423.5l52 -3l27 7.5l-52 3z"/><path class="d" d="M1145.5 426.2h1M1162.5 425.2h1"/><path class="t" d="M1063 403.5l52 -3l27 7.5l-52 3z"/><path class="d" d="M1093.5 406.2h1M1110.5 405.2h1"/><path class="s" d="M1063 403.5l27 7.5v23l-27 -7.5zM1063 415l27 7.5"/><path class="f" d="M1090 411l52 -3v23l-52 3zM1090 422.5l52 -3"/><path class="t" d="M1011 429.5l52 -3l27 7.5l-52 3z"/><path class="d" d="M1041.5 432.2h1M1058.5 431.2h1"/><path class="t" d="M959 421l52 -3l27 7.5l-52 3z"/><path class="d" d="M989.5 423.8h1M1006.5 422.8h1"/><path class="s" d="M959 421l27 7.5v34.5l-27 -7.5zM959 432.5l27 7.5M959 444l27 7.5"/><path class="t" d="M907 458.5l52 -3l27 7.5l-52 3z"/><path class="d" d="M937.5 461.2h1M954.5 460.2h1"/><path class="t" d="M855 461.5l52 -3l27 7.5l-52 3z"/><path class="d" d="M885.5 464.2h1M902.5 463.2h1"/><path class="t" d="M803 441.5l52 -3l27 7.5l-52 3z"/><path class="d" d="M833.5 444.2h1M850.5 443.2h1"/><path class="s" d="M803 441.5l27 7.5v23l-27 -7.5zM803 453l27 7.5"/><path class="f" d="M830 449l52 -3v23l-52 3zM830 460.5l52 -3"/><path class="t" d="M751 467.5l52 -3l27 7.5l-52 3z"/><path class="d" d="M781.5 470.2h1M798.5 469.2h1"/><path class="t" d="M699 436l52 -3l27 7.5l-52 3z"/><path class="d" d="M729.5 438.8h1M746.5 437.8h1"/><path class="f" d="M726 443.5l52 -3v11.5l-52 3z"/><path class="t" d="M647 427.5l52 -3l27 7.5l-52 3z"/><path class="d" d="M677.5 430.2h1M694.5 429.2h1"/><path class="t" d="M595 430.5l52 -3l27 7.5l-52 3z"/><path class="d" d="M625.5 433.2h1M642.5 432.2h1"/><path class="f" d="M622 438l52 -3v11.5l-52 3z"/><path class="t" d="M543 433.5l52 -3l27 7.5l-52 3z"/><path class="d" d="M573.5 436.2h1M590.5 435.2h1"/><path class="s" d="M543 433.5l27 7.5v23l-27 -7.5zM543 445l27 7.5"/><path class="f" d="M570 441l52 -3v11.5l-52 3z"/><path class="t" d="M491 459.5l52 -3l27 7.5l-52 3z"/><path class="d" d="M521.5 462.2h1M538.5 461.2h1"/><path class="t" d="M439 462.5l52 -3l27 7.5l-52 3z"/><path class="d" d="M469.5 465.2h1M486.5 464.2h1"/><path class="f" d="M466 470l52 -3v46l-52 3zM466 481.5l52 -3M466 493l52 -3M466 504.5l52 -3"/><path class="t" d="M387 442.5l52 -3l27 7.5l-52 3z"/><path class="d" d="M417.5 445.2h1M434.5 444.2h1"/><path class="f" d="M414 450l52 -3v69l-52 3zM414 461.5l52 -3M414 473l52 -3M414 484.5l52 -3M414 496l52 -3M414 507.5l52 -3"/><path class="t" d="M335 434l52 -3l27 7.5l-52 3z"/><path class="d" d="M365.5 436.8h1M382.5 435.8h1"/><path class="s" d="M335 434l27 7.5v80.5l-27 -7.5zM335 445.5l27 7.5M335 457l27 7.5M335 468.5l27 7.5M335 480l27 7.5M335 491.5l27 7.5M335 503l27 7.5"/><path class="f" d="M362 441.5l52 -3v80.5l-52 3zM362 453l52 -3M362 464.5l52 -3M362 476l52 -3M362 487.5l52 -3M362 499l52 -3M362 510.5l52 -3"/><path class="t" d="M1194 428l52 -3l27 7.5l-52 3z"/><path class="d" d="M1224.5 430.8h1M1241.5 429.8h1"/><path class="t" d="M1142 431l52 -3l27 7.5l-52 3z"/><path class="d" d="M1172.5 433.8h1M1189.5 432.8h1"/><path class="t" d="M1090 434l52 -3l27 7.5l-52 3z"/><path class="d" d="M1120.5 436.8h1M1137.5 435.8h1"/><path class="t" d="M1038 437l52 -3l27 7.5l-52 3z"/><path class="d" d="M1068.5 439.8h1M1085.5 438.8h1"/><path class="t" d="M986 417l52 -3l27 7.5l-52 3z"/><path class="d" d="M1016.5 419.8h1M1033.5 418.8h1"/><path class="s" d="M986 417l27 7.5v34.5l-27 -7.5zM986 428.5l27 7.5M986 440l27 7.5"/><path class="f" d="M1013 424.5l52 -3v23l-52 3zM1013 436l52 -3"/><path class="t" d="M934 454.5l52 -3l27 7.5l-52 3z"/><path class="d" d="M964.5 457.2h1M981.5 456.2h1"/><path class="t" d="M882 446l52 -3l27 7.5l-52 3z"/><path class="d" d="M912.5 448.8h1M929.5 447.8h1"/><path class="s" d="M882 446l27 7.5v23l-27 -7.5zM882 457.5l27 7.5"/><path class="t" d="M830 472l52 -3l27 7.5l-52 3z"/><path class="d" d="M860.5 474.8h1M877.5 473.8h1"/><path class="t" d="M778 452l52 -3l27 7.5l-52 3z"/><path class="d" d="M808.5 454.8h1M825.5 453.8h1"/><path class="t" d="M726 455l52 -3l27 7.5l-52 3z"/><path class="d" d="M756.5 457.8h1M773.5 456.8h1"/><path class="f" d="M753 462.5l52 -3v46l-52 3zM753 474l52 -3M753 485.5l52 -3M753 497l52 -3"/><path class="t" d="M674 423.5l52 -3l27 7.5l-52 3z"/><path class="d" d="M704.5 426.2h1M721.5 425.2h1"/><path class="s" d="M674 423.5l27 7.5v23l-27 -7.5zM674 435l27 7.5"/><path class="f" d="M701 431l52 -3v34.5l-52 3zM701 442.5l52 -3M701 454l52 -3"/><path class="t" d="M622 449.5l52 -3l27 7.5l-52 3z"/><path class="d" d="M652.5 452.2h1M669.5 451.2h1"/><path class="t" d="M570 452.5l52 -3l27 7.5l-52 3z"/><path class="d" d="M600.5 455.2h1M617.5 454.2h1"/><path class="s" d="M570 452.5l27 7.5v11.5l-27 -7.5z"/><path class="f" d="M597 460l52 -3v57.5l-52 3zM597 471.5l52 -3M597 483l52 -3M597 494.5l52 -3M597 506l52 -3"/><path class="t" d="M518 467l52 -3l27 7.5l-52 3z"/><path class="d" d="M548.5 469.8h1M565.5 468.8h1"/><path class="s" d="M518 467l27 7.5v46l-27 -7.5zM518 478.5l27 7.5M518 490l27 7.5M518 501.5l27 7.5"/><path class="t" d="M1221 424l52 -3l27 7.5l-52 3z"/><path class="d" d="M1251.5 426.8h1M1268.5 425.8h1"/><path class="f" d="M1248 431.5l52 -3v57.5l-52 3zM1248 443l52 -3M1248 454.5l52 -3M1248 466l52 -3M1248 477.5l52 -3"/><path class="t" d="M1169 427l52 -3l27 7.5l-52 3z"/><path class="d" d="M1199.5 429.8h1M1216.5 428.8h1"/><path class="s" d="M1169 427l27 7.5v11.5l-27 -7.5z"/><path class="f" d="M1196 434.5l52 -3v57.5l-52 3zM1196 446l52 -3M1196 457.5l52 -3M1196 469l52 -3M1196 480.5l52 -3"/><path class="t" d="M1117 441.5l52 -3l27 7.5l-52 3z"/><path class="d" d="M1147.5 444.2h1M1164.5 443.2h1"/><path class="f" d="M1144 449l52 -3v46l-52 3zM1144 460.5l52 -3M1144 472l52 -3M1144 483.5l52 -3"/><path class="t" d="M1065 444.5l52 -3l27 7.5l-52 3z"/><path class="d" d="M1095.5 447.2h1M1112.5 446.2h1"/><path class="t" d="M1013 447.5l52 -3l27 7.5l-52 3z"/><path class="d" d="M1043.5 450.2h1M1060.5 449.2h1"/><path class="t" d="M961 450.5l52 -3l27 7.5l-52 3z"/><path class="d" d="M991.5 453.2h1M1008.5 452.2h1"/><path class="f" d="M988 458l52 -3v46l-52 3zM988 469.5l52 -3M988 481l52 -3M988 492.5l52 -3"/><path class="t" d="M909 442l52 -3l27 7.5l-52 3z"/><path class="d" d="M939.5 444.8h1M956.5 443.8h1"/><path class="s" d="M909 442l27 7.5v11.5l-27 -7.5z"/><path class="t" d="M857 456.5l52 -3l27 7.5l-52 3z"/><path class="d" d="M887.5 459.2h1M904.5 458.2h1"/><path class="t" d="M805 459.5l52 -3l27 7.5l-52 3z"/><path class="d" d="M835.5 462.2h1M852.5 461.2h1"/><path class="s" d="M805 459.5l27 7.5v46l-27 -7.5zM805 471l27 7.5M805 482.5l27 7.5M805 494l27 7.5"/><path class="t" d="M701 465.5l52 -3l27 7.5l-52 3z"/><path class="d" d="M731.5 468.2h1M748.5 467.2h1"/><path class="f" d="M728 473l52 -3v46l-52 3zM728 484.5l52 -3M728 496l52 -3M728 507.5l52 -3"/><path class="t" d="M649 434l52 -3l27 7.5l-52 3z"/><path class="d" d="M679.5 436.8h1M696.5 435.8h1"/><path class="s" d="M649 434l27 7.5v80.5l-27 -7.5zM649 445.5l27 7.5M649 457l27 7.5M649 468.5l27 7.5M649 480l27 7.5M649 491.5l27 7.5M649 503l27 7.5"/><path class="f" d="M676 441.5l52 -3v80.5l-52 3zM676 453l52 -3M676 464.5l52 -3M676 476l52 -3M676 487.5l52 -3M676 499l52 -3M676 510.5l52 -3"/><path class="t" d="M545 463l52 -3l27 7.5l-52 3z"/><path class="d" d="M575.5 465.8h1M592.5 464.8h1"/><path class="s" d="M545 463l27 7.5v57.5l-27 -7.5zM545 474.5l27 7.5M545 486l27 7.5M545 497.5l27 7.5M545 509l27 7.5"/><path class="t" d="M1092 452l52 -3l27 7.5l-52 3z"/><path class="d" d="M1122.5 454.8h1M1139.5 453.8h1"/><path class="t" d="M1040 443.5l52 -3l27 7.5l-52 3z"/><path class="d" d="M1070.5 446.2h1M1087.5 445.2h1"/><path class="s" d="M1040 443.5l27 7.5v57.5l-27 -7.5zM1040 455l27 7.5M1040 466.5l27 7.5M1040 478l27 7.5M1040 489.5l27 7.5"/><path class="t" d="M936 438l52 -3l27 7.5l-52 3z"/><path class="d" d="M966.5 440.8h1M983.5 439.8h1"/><path class="s" d="M936 438l27 7.5v23l-27 -7.5zM936 449.5l27 7.5"/><path class="f" d="M963 445.5l52 -3v23l-52 3zM963 457l52 -3"/><path class="t" d="M884 464l52 -3l27 7.5l-52 3z"/><path class="d" d="M914.5 466.8h1M931.5 465.8h1"/><path class="f" d="M911 471.5l52 -3v46l-52 3zM911 483l52 -3M911 494.5l52 -3M911 506l52 -3"/><path class="t" d="M832 467l52 -3l27 7.5l-52 3z"/><path class="d" d="M862.5 469.8h1M879.5 468.8h1"/><path class="t" d="M780 470l52 -3l27 7.5l-52 3z"/><path class="d" d="M810.5 472.8h1M827.5 471.8h1"/><path class="s" d="M780 470l27 7.5v46l-27 -7.5zM780 481.5l27 7.5M780 493l27 7.5M780 504.5l27 7.5"/><path class="t" d="M572 447.5l52 -3l27 7.5l-52 3z"/><path class="d" d="M602.5 450.2h1M619.5 449.2h1"/><path class="f" d="M599 455l52 -3v11.5l-52 3z"/><path class="t" d="M520 450.5l52 -3l27 7.5l-52 3z"/><path class="d" d="M550.5 453.2h1M567.5 452.2h1"/><path class="s" d="M520 450.5l27 7.5v80.5l-27 -7.5zM520 462l27 7.5M520 473.5l27 7.5M520 485l27 7.5M520 496.5l27 7.5M520 508l27 7.5M520 519.5l27 7.5"/><path class="f" d="M547 458l52 -3v80.5l-52 3zM547 469.5l52 -3M547 481l52 -3M547 492.5l52 -3M547 504l52 -3M547 515.5l52 -3M547 527l52 -3"/><path class="t" d="M1171 433.5l52 -3l27 7.5l-52 3z"/><path class="d" d="M1201.5 436.2h1M1218.5 435.2h1"/><path class="s" d="M1171 433.5l27 7.5v11.5l-27 -7.5z"/><path class="f" d="M1198 441l52 -3v69l-52 3zM1198 452.5l52 -3M1198 464l52 -3M1198 475.5l52 -3M1198 487l52 -3M1198 498.5l52 -3"/><path class="t" d="M1119 448l52 -3l27 7.5l-52 3z"/><path class="d" d="M1149.5 450.8h1M1166.5 449.8h1"/><path class="f" d="M1146 455.5l52 -3v11.5l-52 3z"/><path class="t" d="M1067 451l52 -3l27 7.5l-52 3z"/><path class="d" d="M1097.5 453.8h1M1114.5 452.8h1"/><path class="s" d="M1067 451l27 7.5v57.5l-27 -7.5zM1067 462.5l27 7.5M1067 474l27 7.5M1067 485.5l27 7.5M1067 497l27 7.5"/><path class="t" d="M963 468.5l52 -3l27 7.5l-52 3z"/><path class="d" d="M993.5 471.2h1M1010.5 470.2h1"/><path class="s" d="M963 468.5l27 7.5v46l-27 -7.5zM963 480l27 7.5M963 491.5l27 7.5M963 503l27 7.5"/><path class="t" d="M859 474.5l52 -3l27 7.5l-52 3z"/><path class="d" d="M889.5 477.2h1M906.5 476.2h1"/><path class="f" d="M886 482l52 -3v46l-52 3zM886 493.5l52 -3M886 505l52 -3M886 516.5l52 -3"/><path class="t" d="M807 477.5l52 -3l27 7.5l-52 3z"/><path class="d" d="M837.5 480.2h1M854.5 479.2h1"/><path class="f" d="M834 485l52 -3v46l-52 3zM834 496.5l52 -3M834 508l52 -3M834 519.5l52 -3"/><path class="t" d="M755 446l52 -3l27 7.5l-52 3z"/><path class="d" d="M785.5 448.8h1M802.5 447.8h1"/><path class="s" d="M755 446l27 7.5v23l-27 -7.5zM755 457.5l27 7.5"/><path class="f" d="M782 453.5l52 -3v80.5l-52 3zM782 465l52 -3M782 476.5l52 -3M782 488l52 -3M782 499.5l52 -3M782 511l52 -3M782 522.5l52 -3"/><path class="t" d="M703 472l52 -3l27 7.5l-52 3z"/><path class="d" d="M733.5 474.8h1M750.5 473.8h1"/><path class="s" d="M703 472l27 7.5v57.5l-27 -7.5zM703 483.5l27 7.5M703 495l27 7.5M703 506.5l27 7.5M703 518l27 7.5"/><path class="f" d="M730 479.5l52 -3v57.5l-52 3zM730 491l52 -3M730 502.5l52 -3M730 514l52 -3M730 525.5l52 -3"/><path class="t" d="M599 466.5l52 -3l27 7.5l-52 3z"/><path class="d" d="M629.5 469.2h1M646.5 468.2h1"/><path class="s" d="M599 466.5l27 7.5v69l-27 -7.5zM599 478l27 7.5M599 489.5l27 7.5M599 501l27 7.5M599 512.5l27 7.5M599 524l27 7.5"/><path class="f" d="M626 474l52 -3v69l-52 3zM626 485.5l52 -3M626 497l52 -3M626 508.5l52 -3M626 520l52 -3M626 531.5l52 -3"/><path class="t" d="M1146 467l52 -3l27 7.5l-52 3z"/><path class="d" d="M1176.5 469.8h1M1193.5 468.8h1"/><path class="f" d="M1173 474.5l52 -3v46l-52 3zM1173 486l52 -3M1173 497.5l52 -3M1173 509l52 -3"/><path class="t" d="M1094 447l52 -3l27 7.5l-52 3z"/><path class="d" d="M1124.5 449.8h1M1141.5 448.8h1"/><path class="s" d="M1094 447l27 7.5v23l-27 -7.5zM1094 458.5l27 7.5"/><path class="t" d="M1042 473l52 -3l27 7.5l-52 3z"/><path class="d" d="M1072.5 475.8h1M1089.5 474.8h1"/><path class="t" d="M990 476l52 -3l27 7.5l-52 3z"/><path class="d" d="M1020.5 478.8h1M1037.5 477.8h1"/><path class="f" d="M1017 483.5l52 -3v46l-52 3zM1017 495l52 -3M1017 506.5l52 -3M1017 518l52 -3"/><path class="t" d="M938 467.5l52 -3l27 7.5l-52 3z"/><path class="d" d="M968.5 470.2h1M985.5 469.2h1"/><path class="s" d="M938 467.5l27 7.5v57.5l-27 -7.5zM938 479l27 7.5M938 490.5l27 7.5M938 502l27 7.5M938 513.5l27 7.5"/><path class="t" d="M1121 443l52 -3l27 7.5l-52 3z"/><path class="d" d="M1151.5 445.8h1M1168.5 444.8h1"/><path class="s" d="M1121 443l27 7.5v23l-27 -7.5zM1121 454.5l27 7.5"/><path class="f" d="M1148 450.5l52 -3v11.5l-52 3z"/><path class="t" d="M1069 469l52 -3l27 7.5l-52 3z"/><path class="d" d="M1099.5 471.8h1M1116.5 470.8h1"/><path class="s" d="M1069 469l27 7.5v57.5l-27 -7.5zM1069 480.5l27 7.5M1069 492l27 7.5M1069 503.5l27 7.5M1069 515l27 7.5"/><path class="f" d="M1096 476.5l52 -3v57.5l-52 3zM1096 488l52 -3M1096 499.5l52 -3M1096 511l52 -3M1096 522.5l52 -3"/><path class="t" d="M965 475l52 -3l27 7.5l-52 3z"/><path class="d" d="M995.5 477.8h1M1012.5 476.8h1"/><path class="s" d="M965 475l27 7.5v57.5l-27 -7.5zM965 486.5l27 7.5M965 498l27 7.5M965 509.5l27 7.5M965 521l27 7.5"/><path class="f" d="M992 482.5l52 -3v57.5l-52 3zM992 494l52 -3M992 505.5l52 -3M992 517l52 -3M992 528.5l52 -3"/><path class="t" d="M1148 462l52 -3l27 7.5l-52 3z"/><path class="d" d="M1178.5 464.8h1M1195.5 463.8h1"/><path class="s" d="M1148 462l27 7.5v69l-27 -7.5zM1148 473.5l27 7.5M1148 485l27 7.5M1148 496.5l27 7.5M1148 508l27 7.5M1148 519.5l27 7.5"/><path class="f" d="M1175 469.5l52 -3v69l-52 3zM1175 481l52 -3M1175 492.5l52 -3M1175 504l52 -3M1175 515.5l52 -3M1175 527l52 -3"/><path class="t" d="M888 465.5l52 -3l27 7.5l-52 3z"/><path class="d" d="M918.5 468.2h1M935.5 467.2h1"/><path class="f" d="M915 473l52 -3v80.5l-52 3zM915 484.5l52 -3M915 496l52 -3M915 507.5l52 -3M915 519l52 -3M915 530.5l52 -3M915 542l52 -3"/><path class="t" d="M836 468.5l52 -3l27 7.5l-52 3z"/><path class="d" d="M866.5 471.2h1M883.5 470.2h1"/><path class="s" d="M836 468.5l27 7.5v80.5l-27 -7.5zM836 480l27 7.5M836 491.5l27 7.5M836 503l27 7.5M836 514.5l27 7.5M836 526l27 7.5M836 537.5l27 7.5"/><path class="f" d="M863 476l52 -3v80.5l-52 3zM863 487.5l52 -3M863 499l52 -3M863 510.5l52 -3M863 522l52 -3M863 533.5l52 -3M863 545l52 -3"/><polygon class="f" points="292,442 344,438.5 344,417.5 292,421"/><path fill="none" d="M292 431.5L344 428"/><path d="M292 442v-21"/><polygon class="f" points="451,469 506,467 586,470.5 700,467 700,446 586,449.5 506,446 451,448"/><path fill="none" d="M451 458.5L506 456.5L586 460L700 456.5"/><path d="M451 469v-21"/><path d="M503 467.109v-21"/><path d="M555 469.144v-21"/><path d="M607 469.855v-21"/><path d="M659 468.259v-21"/><polygon class="f" points="747,478 799,473 799,452 747,457"/><path fill="none" d="M747 467.5L799 462.5"/><path d="M747 478v-21"/><polygon class="f" points="856,490 910,486.5 957,483 1000,481 1000,460 957,462 910,465.5 856,469"/><path fill="none" d="M856 479.5L910 476L957 472.5L1000 470.5"/><path d="M856 490v-21"/><path d="M908 486.63v-21"/><path d="M960 482.86v-21"/><polygon class="f" points="1235,431 1262,428 1314,426 1344,424 1344,413.5 1314,415.5 1262,417.5 1235,420.5"/><path d="M1235 431v-10.5"/><path d="M1287 427.038v-10.5"/><path d="M1339 424.333v-10.5"/><polygon class="f" points="1208,446 1235,444 1235,432 1208,434"/><path d="M1208 446v-12"/></g>
<polygon points="956,474 959,474 959,469 963,466 967,466 967,465 971,465 971,463 975,463 975,462 979,462 979,461 983,461 983,458 987,458 987,457 991,457 991,458 995,458 995,455 999,454 1003,454 1003,452 1008,452 1008,453 1011,453 1011,451 1016,451 1016,451 1019,451 1019,448 1024,448 1024,448 1027,448 1027,445 1032,445 1032,446 1036,446 1036,445 1040,445 1040,443 1044,442 1049,442 1049,439 1053,436 1057,436 1057,436 1061,436 1061,434 1065,434 1065,437 1069,437 1069,436 1074,436 1074,436 1078,436 1078,435 1082,435 1082,438 1086,438 1086,437 1090,437 1094,437 1094,438 1099,438 1099,439 1103,439 1103,438 1107,438 1107,439 1112,439 1112,438 1116,438 1116,439 1120,439 1120,438 1125,438 1125,440 1129,439 1133,439 1133,440 1137,440 1137,438 1141,438 1141,438 1145,438 1145,438 1149,438 1149,440 1153,440 1153,439 1157,439 1157,439 1161,439 1161,438 1165,439 1169,439 1169,440 1173,440 1173,441 1177,441 1177,442 1181,442 1181,443 1185,443 1185,444 1189,444 1189,446 1193,446 1193,447 1197,447 1197,448 1201,448 1205,448 1205,449 1209,449 1209,450 1213,450 1213,449 1217,449 1217,448 1221,448 1221,450 1225,450 1225,450 1229,450 1229,450 1233,450 1233,450 1237,450 1241,450 1241,452 1246,452 1246,452 1250,452 1250,455 1255,456 1258,456 1258,459 1262,459 1262,462 1266,462 1266,465 1268,469 1272,469 1272,471 1276,471 1276,473 1281,473 1281,471 1285,471 1285,474 1290,474 1294,474 1294,474 1299,474 1299,474 1303,474 1303,475 1307,475 1307,478 1311,478 1311,479 1316,479 1316,477 1319,477 1319,479 1324,479 1324,478 1328,480 1332,480 1332,481 1336,481 1336,481 1340,481 1340,483 1344,483 1344,484 1348,484 1348,483 1352,483 1352,486 1356,486 1356,484 1360,484 1360,484 1364,484 1364,486 1368,486 1368,485 1372,485 1372,486 1376,488 1380,488 1380,489 1384,489 1384,490 1388,490 1388,490 1392,490 1392,491 1396,491 1396,494 1400,494 1400,493 1404,493 1404,496 1408,496 1408,497 1412,497 1412,497 1416,498 1416,505 1413,505 1413,508 1410,508 1410,511 1406,511 1406,514 1403,514 1403,517 1400,520 1397,520 1397,523 1395,523 1395,526 1392,526 1392,529 1390,529 1390,533 1388,533 1388,537 1385,537 1385,540 1384,540 1384,544 1381,544 1381,547 1378,550 1374,550 1374,551 1370,551 1370,554 1367,554 1367,556 1364,556 1364,559 1359,559 1359,560 1355,560 1355,562 1352,562 1352,565 1348,566 1346,566 1346,570 1344,570 1344,574 1344,574 1344,579 1341,579 1341,582 1340,582 1340,586 1338,590 1335,590 1335,593 1333,593 1333,596 1329,596 1329,599 1326,599 1326,601 1325,601 1325,606 1321,608 1317,608 1317,611 1312,611 1312,610 1307,610 1307,610 1303,610 1303,613 1299,613 1299,614 1294,615 1290,615 1290,614 1286,614 1286,615 1282,615 1282,614 1278,614 1278,614 1274,614 1274,614 1270,614 1270,613 1266,613 1266,613 1262,613 1262,613 1258,613 1258,611 1254,611 1254,613 1250,613 1250,611 1246,611 1242,611 1242,609 1238,609 1238,609 1233,609 1233,608 1230,608 1230,606 1225,606 1225,606 1221,606 1221,605 1217,605 1217,603 1213,602 1213,602 1213,598 1210,598 1210,594 1210,594 1210,590 1209,590 1209,586 1210,586 1210,582 1208,582 1208,578 1207,574 1205,574 1205,570 1200,570 1200,569 1198,565 1196,565 1196,561 1195,561 1195,556 1193,551 1189,551 1189,550 1185,550 1185,552 1181,552 1181,553 1177,553 1177,554 1173,554 1173,553 1169,553 1169,555 1165,555 1165,553 1161,553 1161,554 1157,554 1157,556 1153,556 1153,556 1149,556 1149,555 1145,555 1145,556 1141,557 1138,557 1138,553 1133,553 1133,551 1129,548 1125,548 1125,547 1121,547 1121,545 1118,545 1118,541 1113,541 1113,541 1110,538 1106,538 1106,538 1102,538 1102,538 1097,538 1097,538 1093,538 1093,537 1089,537 1089,536 1085,536 1085,538 1081,538 1081,538 1076,538 1076,535 1072,535 1072,535 1068,536 1064,536 1064,535 1060,535 1060,537 1055,537 1055,536 1051,536 1051,537 1048,537 1048,540 1043,540 1043,539 1039,539 1039,539 1035,541 1031,541 1031,540 1026,540 1026,539 1021,539 1021,539 1017,539 1017,538 1012,538 1012,538 1008,536 1004,536 1004,533 1002,533 1002,529 998,529 998,526 997,526 997,521 993,518 989,518 989,517 987,517 987,513 983,513 983,511 980,511 980,508 977,508 977,506 973,506 973,504 969,503 968,503 968,499 964,499 964,496 965,496 965,492 961,492 961,489 960,489 960,485 959,481" fill="url(#pt)"/>
<g clip-path="url(#cb)"><polygon points="940,492 1000,470 1050,458 1130,462 1200,470 1250,478 1300,492 1380,505 1430,515 1430,630 940,630" fill="url(#pt2)"/></g>
<g fill="none" stroke-linecap="round" stroke-linejoin="round">
<path d="M891 326L851 327L826 327.6L777 329.5L742 331L700 334L670 336.7L627 344L587 349.3L531 353.7L521 357L547 361.5L590 367L637 371L690 374L727 382.7L769 391L821 405L873 418.5M768 428.4L751 425.6L801 422.8M158 411L209 403L240 404.2L292 408.6L393 409.6L408 413L453.6 429.7L468.6 433.3M236 423L265 424.7L344 428.4L398 431L452 430.6L468.6 433.3L532 434.6L561 438.3L660 448L700 452L749 459.3L791 461.3L888 461.8L952 459.5L962 466M468.6 433.3L445 447M492 421L507 423.5L532 431L564 437.5M909 453L950 460M962 466L947 465.5L921 477L931 485L945 492.5L968 495L1035 499.8L1081 500.7L1115 501.6" stroke="#e8e2dc" stroke-opacity=".45" stroke-width="2.7"/>
<path d="M1141 501.3L1172 505L1201 508M1172 505L1189 512.8L1213 529.3L1224 534L1261 541L1321 544L1363 541M1270 558L1309 553L1345 553.4M1025 518L1049 524M1162 537L1187 538.3M1273 600L1306 602L1320 600" stroke="#fff" stroke-opacity=".55" stroke-width="3"/>
<path d="M1115 538L1132 544L1156 548L1181 549M1192 576L1211 577.5" stroke="#eee" stroke-opacity=".85" stroke-width="3.4"/>
</g>
<defs>
<g id="pinR"><path d="M0 .5C-6-6-15-17-22-30C-25-36.5-23-40-18.5-39.5C-14-39-9-35-5-26C-1-16 2-6 2.6 0z" fill="#ff0606"/><path d="M-2.2-2.5C-8-9-15.5-18.5-21.5-30C-24-35.5-22.6-38.6-19.4-38C-16-37.3-12.3-31-9.3-23.5C-6.2-15.5-3.6-8-2.2-2.5z" fill="#860000"/><ellipse cx="-14.8" cy="-25.6" rx="2.6" ry="4.2" transform="rotate(-32 -14.8 -25.6)" fill="#e40000"/><ellipse cx="-14.2" cy="-25" rx="1.2" ry="2.3" transform="rotate(-32 -14.2 -25)" fill="#ff3030"/></g>
<g id="pinG"><path d="M0 .5C-6-6-15-17-22-30C-25-36.5-23-40-18.5-39.5C-14-39-9-35-5-26C-1-16 2-6 2.6 0z" fill="#00c800"/><path d="M-2.2-2.5C-8-9-15.5-18.5-21.5-30C-24-35.5-22.6-38.6-19.4-38C-16-37.3-12.3-31-9.3-23.5C-6.2-15.5-3.6-8-2.2-2.5z" fill="#005a00"/><ellipse cx="-14.8" cy="-25.6" rx="2.6" ry="4.2" transform="rotate(-32 -14.8 -25.6)" fill="#00a400"/><ellipse cx="-14.2" cy="-25" rx="1.2" ry="2.3" transform="rotate(-32 -14.2 -25)" fill="#22d822"/></g>
</defs>
<use href="#pinG" transform="translate(201.5 401) scale(0.95)"/>
<use href="#pinR" transform="translate(158.3 411) scale(1)"/>
<use href="#pinG" transform="translate(236 423) scale(1)"/>
<use href="#pinR" transform="translate(393.4 410) scale(1)"/>
<use href="#pinR" transform="translate(453.6 430) scale(0.8)"/>
<use href="#pinR" transform="translate(445.3 446) scale(0.95)"/>
<use href="#pinG" transform="translate(962 467) scale(1)"/>
<use href="#pinG" transform="translate(1172.4 506.5) scale(1)"/>
<use href="#pinG" transform="translate(1199.5 508) scale(1)"/>
<g transform="translate(881 428)"><path d="M-12-10C-10-13-6-13-2.5-9C3-3 9 6 11.5 12C7 12.5 1 11-3 6C-8 0-12-6-12-10z" fill="#ff0606"/><path d="M-12-9.5C-11-11.5-8-11-5-7.5C0-2 5 6 6.5 11.5C2 11-2 8-5.5 3.5C-9.5-1.5-12.5-6.5-12-9.5z" fill="#a40000"/><ellipse cx="-3.5" cy="0" rx="2.4" ry="4" transform="rotate(-35 -3.5 0)" fill="#f01010"/></g>
<g font-family="Liberation Sans,sans-serif" font-weight="700" font-size="15.5" fill="#000" stroke="#fff" stroke-width="2.9" stroke-linejoin="round" paint-order="stroke">
<text x="130" y="368.4">Leach</text>
<text x="133.5" y="359">Leach Stockpile</text>
<text x="179.5" y="381.6">Mill Stockpile</text>
<text x="325" y="367.3">Leach Stockpile</text>
<text x="396.4" y="387.2">Mill Stockpile</text>
<text x="425.4" y="404">Mill</text>
<text x="864.4" y="411">Dump</text>
<text x="905" y="424.7">Stage 1, 3 &amp; 4</text>
<text x="1166" y="462.5">Stage 1</text>
<text x="1138" y="462.3">Stage 5</text>
</g>
<path d="M1428.8 135V156" stroke="#22e2ea" stroke-width="1.6"/><path d="M1429 155.6L1443.8 153.3" stroke="#00e400" stroke-width="1.4"/><path d="M1429 156.6L1443.8 159.8" stroke="#f00" stroke-width="1.4"/>
<g font-family="Liberation Sans,sans-serif" font-size="15"><text x="1427" y="134" fill="#22e2ea" stroke="#22e2ea" stroke-width=".4">Z</text><text x="1446" y="156.3" fill="#00e400" font-size="14" stroke="#00e400" stroke-width=".3">N</text><text x="1444.3" y="164" fill="#f00" font-size="13.5" stroke="#f00" stroke-width=".4">E</text></g>
</svg>
</div>
<!--/VIEW3D-->

<!--UI-->
<!-- b_menu -->
<div class="a" style="left:0;top:0">
<svg style="left:111px;top:2px" width="214" height="22" viewBox="0 0 214 22"><defs><linearGradient id="tg" x1="0" y1="0" x2="0" y2="1"><stop offset="0" stop-color="#fbfdff"/><stop offset="1" stop-color="#d3e4f8"/></linearGradient><linearGradient id="tg2" x1="0" y1="0" x2="0" y2="1"><stop offset="0" stop-color="#e6effa"/><stop offset="1" stop-color="#b6cce8"/></linearGradient></defs><path d="M0 22V19.500h2.600L18.400 0H210.600V19.500H214V22z" fill="url(#tg)"/><path d="M2.600 19.500 18.400 .2" stroke="#5f9dc6" stroke-width=".8"/></svg>
<svg style="left:133px;top:4px" width="16" height="16" viewBox="0 0 16 16"><rect width="16" height="16" fill="#8abbd3"/><path d="M6.200 4.400h6.800l-.600 2.100H9.600L7.800 9.500h4.400l-.600 2.100H4.200l.600-2.100L7 6.500H5.600z" fill="#f4f6f6"/></svg>
<svg style="left:304.5px;top:9px" width="8" height="8" viewBox="0 0 8 8"><path d="M1 1l6 6M7 1l-6 6" stroke="#666" stroke-width="1.8" fill="none"/><path d="M2.5 4h3M4 2.5v3" stroke="#666" stroke-width="1.6"/></svg>
<svg style="left:322px;top:2px" width="113.5" height="19.5" viewBox="0 0 113.5 19.5"><path d="M.5 19.500V12C.5 5 4 .5 11.500 .5H113.5V19.500z" fill="url(#tg2)"/><path d="M.5 19.500V12C.5 5 4 .5 11.500 .5H113.0" fill="none" stroke="#6b9bc9" stroke-width="1"/><path d="M113.0 .5V19.500" stroke="#7fa6d0" stroke-width="1"/></svg>
<svg style="left:435.5px;top:2px" width="93" height="19.5" viewBox="0 0 93 19.5"><path d="M.5 19.500V12C.5 5 4 .5 11.500 .5H93V19.500z" fill="url(#tg2)"/><path d="M.5 19.500V12C.5 5 4 .5 11.500 .5H92.5" fill="none" stroke="#6b9bc9" stroke-width="1"/><path d="M92.5 .5V19.500" stroke="#7fa6d0" stroke-width="1"/></svg>
<svg style="left:335px;top:4.5px" width="16.5" height="15" viewBox="0 0 16 16"><path d="M8 1.2 0.6 8.2l1.2 1.2L8 3.6l6.2 5.8 1.2-1.2L12.6 5.6V2.2h-2v1.5z" fill="#1a6fa8"/><path d="M8 4.6 2.8 9.4V15h3.6v-4h3.2v4h3.6V9.4z" fill="#1a6fa8"/></svg>
<svg style="left:415.5px;top:9px" width="8" height="8" viewBox="0 0 8 8"><path d="M1 1l6 6M7 1l-6 6" stroke="#666" stroke-width="1.8" fill="none"/><path d="M2.5 4h3M4 2.5v3" stroke="#666" stroke-width="1.6"/></svg>
<svg style="left:449px;top:4px" width="16" height="16" viewBox="0 0 16 16"><rect width="16" height="16" fill="#8abbd3"/><path d="M6.2 3.4h6.4l-.7 2.1H5.5zM5.3 7h6.4l-.7 2.1H4.6zM4.4 10.6h6.4l-.7 2.1H3.7z" fill="#fff"/></svg>
<svg style="left:508.5px;top:9px" width="8" height="8" viewBox="0 0 8 8"><path d="M1 1l6 6M7 1l-6 6" stroke="#666" stroke-width="1.8" fill="none"/><path d="M2.5 4h3M4 2.5v3" stroke="#666" stroke-width="1.6"/></svg>
<svg style="left:1447px;top:6px" width="9" height="5" viewBox="0 0 9 5"><path d="M0 0h9L4.5 4.6z" fill="#3b4a54"/></svg>
<svg style="left:1461px;top:3.5px" width="8.5" height="8.5" viewBox="0 0 9 9"><path d="M.7 .7l7.6 7.6M8.3 .7L.7 8.3" stroke="#3b4a54" stroke-width="1.3" fill="none"/></svg>
<div style="left:913px;top:27px;width:92px;height:30px;background:#dcecf5;"></div>
<svg style="left:126.8px;top:34px" width="16" height="16" viewBox="0 0 16 16"><g fill="none" stroke="#1a7bb5" stroke-width="1.3"><rect x=".8" y=".8" width="5.6" height="5.6"/><circle cx="12.3" cy="3.6" r="2.9"/><path d="M3.6 9.3l3 3-3 3-3-3z"/><path d="M3.6 6.4v2.9M6.4 3.6h3" stroke="#6a6a6a" stroke-width="1"/></g></svg>
<svg style="left:237.2px;top:40.3px" width="6.4" height="4" viewBox="0 0 6.4 4"><path d="M0 0h6.4L3.2 3.8z" fill="#1a7bb5"/></svg>
<svg style="left:267px;top:34px" width="16" height="16" viewBox="0 0 16 16"><g fill="none"><circle cx="8" cy="8" r="6.6" stroke="#1a7bb5" stroke-width="1.3"/><path d="M3.4 8.5l1.6-3.6h6l1.6 3.6" stroke="#1a7bb5" stroke-width="1.2"/><path d="M5.5 8.6l2 1.4 4-4.4" stroke="#777" stroke-width="1"/><circle cx="4.6" cy="11" r="2" fill="#666"/><circle cx="11.4" cy="11" r="2" fill="#666"/><circle cx="4.6" cy="11" r=".8" fill="#ddd"/><circle cx="11.4" cy="11" r=".8" fill="#ddd"/></g></svg>
<svg style="left:361px;top:40.3px" width="6.4" height="4" viewBox="0 0 6.4 4"><path d="M0 0h6.4L3.2 3.8z" fill="#1a7bb5"/></svg>
<svg style="left:390.5px;top:34px" width="16" height="16" viewBox="0 0 16 16"><rect x=".5" y=".5" width="15" height="15" fill="#fff" stroke="#9a9a9a"/><rect width="16" height="4.4" fill="#d8535e"/><path d="M3 8h2.6v1.8H3zM6.7 8h2.6v1.8H6.7zM10.4 8H13v1.8h-2.6zM3 11h2.6v1.8H3zM6.7 11h2.6v1.8H6.7zM10.4 11H13v1.8h-2.6z" fill="#c9c9c9"/></svg>
<svg style="left:474.5px;top:40.3px" width="6.4" height="4" viewBox="0 0 6.4 4"><path d="M0 0h6.4L3.2 3.8z" fill="#1a7bb5"/></svg>
<svg style="left:504px;top:34px" width="16" height="16" viewBox="0 0 16 16"><path d="M5.2 3.2h7.2l3 9.8H.8z" fill="#fff" stroke="#1a7bb5" stroke-width="1.2"/><path d="M5 8l4-3.6h3l2.4 8H2z" fill="#e48a90"/><path d="M8 13l1.5-6 3-2.4 2 8.4z" fill="#d8535e"/></svg>
<svg style="left:580.5px;top:40.3px" width="6.4" height="4" viewBox="0 0 6.4 4"><path d="M0 0h6.4L3.2 3.8z" fill="#1a7bb5"/></svg>
<svg style="left:610px;top:34px" width="16" height="16" viewBox="0 0 16 16"><rect y="4.4" width="16" height="11.6" fill="#2d8bc0"/><rect width="16" height="4.4" fill="#d8535e"/><path d="M4.4 13.4l6-6M11.6 13.4l-6-6" stroke="#fff" stroke-width="1.4"/><path d="M3.6 8.4l2.2-2.2 1.6.6M12.4 8.4l-2.2-2.2-1.6.6" stroke="#fff" stroke-width="1.3" fill="none"/></svg>
<svg style="left:704px;top:34px" width="16" height="16" viewBox="0 0 16 16"><path d="M6.5 0v16M9.5 0v16" stroke="#1a7bb5" stroke-width="1.3"/><path d="M0 8h5M16 8h-5" stroke="#e0262f" stroke-width="1.2"/><path d="M2.6 5.2 5.6 8l-3 2.8zM13.4 5.2 10.4 8l3 2.8z" fill="#e0262f"/></svg>
<svg style="left:800.4px;top:40.3px" width="6.4" height="4" viewBox="0 0 6.4 4"><path d="M0 0h6.4L3.2 3.8z" fill="#1a7bb5"/></svg>
<svg style="left:829.7px;top:34px" width="16" height="16" viewBox="0 0 16 16"><circle cx="2.4" cy="8" r="2.1" fill="#1a7bb5"/><circle cx="8.2" cy="8" r="2.1" fill="#1a7bb5"/><circle cx="14" cy="8" r="2.1" fill="#1a7bb5"/></svg>
<svg style="left:897px;top:40.3px" width="6.4" height="4" viewBox="0 0 6.4 4"><path d="M0 0h6.4L3.2 3.8z" fill="#1a7bb5"/></svg>
<svg style="left:927px;top:34px" width="16" height="16" viewBox="0 0 16 16"><rect x=".6" y=".6" width="14.8" height="14.8" fill="#429bc6" stroke="#1a7bb5" stroke-width="1.2"/><path d="M9.5 .6v9.2l5.9 5.6" stroke="#fff" stroke-width=".9" fill="none" opacity=".9"/><path d="M9.5 9.8 .6 12.2V15.4H15.4z" fill="#9ccbe2"/><path d="M9.5 .6h5.9v14.8L9.5 9.8z" fill="#6fb2d5"/><rect x=".6" y=".6" width="14.8" height="14.8" fill="none" stroke="#1a7bb5" stroke-width="1.2"/></svg>
<svg style="left:169px;top:66px" width="13" height="13" viewBox="0 0 13 13"><path d="M6.4 1.2H1v10.2h10.4V6.4" fill="none" stroke="#1a7bb5" stroke-width="1.5"/><path d="M5 7.4l6-6" stroke="#1a7bb5" stroke-width="1.6"/><path d="M7 .6h5v5z" fill="#1a7bb5"/></svg>
<svg style="left:118.3px;top:93.8px" width="13.5" height="14.5" viewBox="0 0 13.5 14.5"><path d="M1 .8l11.6 5.6-4.4 1.7 3 4.2-2.1 1.5-3-4.3-3 3.4z" fill="#fff" stroke="#1a7bb5" stroke-width="1.5" stroke-linejoin="round"/></svg>
<div style="left:139px;top:88px;width:22px;height:25.5px;background:#e3eef5;border:1px solid #c6c8dc;"></div>
<svg style="left:143px;top:93px" width="14" height="15" viewBox="0 0 14 15"><g fill="none" stroke="#b7d3e3" stroke-width="1"><path d="M3.6 9.2C2 7 1.4 6 2.2 5.6c.9-.4 1.6.8 2.4 1.8L3.8 3.3c-.2-1.2 1.2-1.4 1.5-.3l.9 3-.3-4.2c0-1.2 1.5-1.2 1.6 0l.4 4.1.5-3.600c.2-1.100 1.600-.9 1.500.2l-.3 4 .8-2.500c.4-1 1.600-.6 1.400.4-.5 2.600-.7 4.600-1.300 6.200C9.800 12.900 8 13.600 6.300 13c-1.200-.4-1.900-2.200-2.700-3.800z"/></g></svg>
<div style="left:165px;top:88px;width:44px;height:25.5px;background:#eaf3f8;border:1px solid #dbe9f2;"></div>
<svg style="left:170.5px;top:94.5px" width="16.4" height="13" viewBox="0 0 16.4 13"><rect x=".7" y=".7" width="15" height="11.600" fill="none" stroke="#1a7bb5" stroke-width="1.300" stroke-dasharray="3.200 2"/></svg>
<svg style="left:197.4px;top:99px" width="6.4" height="4" viewBox="0 0 6.4 4"><path d="M0 0h6.4L3.2 3.8z" fill="#000"/></svg>
<div style="left:213px;top:88px;width:65px;height:25.5px;background:#fff;border:1px solid #c6c8dc;"></div>
<svg style="left:266.2px;top:99.5px" width="6.4" height="4" viewBox="0 0 6.4 4"><path d="M0 0h6.4L3.2 3.8z" fill="#000"/></svg>
<div style="left:282px;top:88px;width:22px;height:25.5px;background:#e3eef5;border:1px solid #c6c8dc;"></div>
<svg style="left:287.2px;top:93.5px" width="12" height="14.5" viewBox="0 0 12 14.5"><path d="M6 .7c3 0 4.700 2.200 4.700 4.500 0 2-1.500 2.900-2 4.700H3.300C2.800 8.100 1.300 7.200 1.300 5.200 1.300 2.900 3 .7 6 .7z" fill="#f7d34a" stroke="#1a7bb5" stroke-width="1.300"/><path d="M3.600 10.200h4.800v2.200L7.300 14H4.700l-1.100-1.600z" fill="#1a7bb5"/></svg>
<svg style="left:314px;top:92.5px" width="16" height="16" viewBox="0 0 16 16"><path d="M8 3.600 15 9.400 8 15.600 1 9.400z" fill="#2d8bc0"/><path d="M8 3.600 1 9.400h14z" fill="#79b8dc"/><path d="M8 3.600 5.500 9.400 8 15.600l2.500-6.200z" fill="#1a6fa8" opacity=".55"/><circle cx="13" cy="3" r="2.500" fill="#f3d36b" stroke="#a98" stroke-width=".5"/><path d="M12 5.400h2v1.400h-2z" fill="#888"/></svg>
<div style="left:339px;top:89px;width:1px;height:24px;background:#c9c9cf;"></div>
<svg style="left:348px;top:94.5px" width="12" height="13" viewBox="0 0 12 13"><circle cx="6" cy="6.500" r="5.600" fill="#3f93c4"/><path d="M3 4.200 6.800 2.600l3.400 1.600v4.600L6.400 10.800 3 9z" fill="#e03038"/><path d="M3 4.200l3.400 1.700 3.800-1.700M6.400 5.900v4.900" stroke="#a31d24" stroke-width=".7" fill="none"/></svg>
<svg style="left:369.3px;top:93.8px" width="14" height="14.4" viewBox="0 0 14 14.4"><path d="M7 .8l6 3v6.600l-6 3.200-6-3.200V3.800z" fill="#a9d2e8" stroke="#5aa5cf" stroke-width="1"/><path d="M1 3.800l6 3 6-3M7 6.800v6.800" stroke="#5aa5cf" stroke-width=".8" fill="none"/><circle cx="7.600" cy="6.400" r="2.300" fill="#e0262f"/></svg>
<div style="left:390px;top:89px;width:1px;height:24px;background:#c9c9cf;"></div>
<div style="left:395px;top:88px;width:22px;height:25.5px;background:#e3eef5;border:1px solid #c6c8dc;"></div>
<svg style="left:398px;top:93.2px" width="16" height="15" viewBox="0 0 16 15"><path d="M3.500 1.200h12l-3 3.300v9.700h-12V4.500z" fill="none" stroke="#e07078" stroke-width="1"/><rect x="2" y="4.500" width="9" height="9" fill="#e3f0f8" stroke="#1a7bb5" stroke-width="1.300"/><path d="M5 2h9v9M2 4.500 5 2M11 4.500 14 2M11 13.500l3-2.500M5 2v6.500h9M5 8.500l-3 5" fill="none" stroke="#1a7bb5" stroke-width="1.100"/></svg>
<svg style="left:424px;top:92.8px" width="16.5" height="15.5" viewBox="0 0 16.5 15.5"><path d="M4 .8h12l-2.500 3.400v9.600L11 15H.8V4.200z" fill="none" stroke="#e07078" stroke-width="1"/><rect x="2" y="4.800" width="9" height="9" fill="none" stroke="#1a7bb5" stroke-width="1.300"/><path d="M2 4.800 5 2h9l-3 2.800M14 2v9l-3 2.800M2 13.800l9-9" fill="none" stroke="#1a7bb5" stroke-width="1.100"/></svg>
<svg style="left:450.8px;top:94.3px" width="15" height="15" viewBox="0 0 15 15"><path d="M4.300 0h6.400L15 4.300v6.400L10.700 15H4.300L0 10.700V4.300z" fill="#fff"/><path d="M4.800 1.100h5.400l3.700 3.700v5.400l-3.700 3.700H4.800L1.100 10.200V4.800z" fill="#c8161d"/><circle cx="4.600" cy="7.500" r="1.100" fill="#fff"/><circle cx="7.500" cy="7.500" r="1.100" fill="#fff"/><circle cx="10.400" cy="7.500" r="1.100" fill="#fff"/></svg>
<svg style="left:480.5px;top:93.5px" width="14" height="15" viewBox="0 0 14 15"><path d="M5.500 2v8.500L1.800 13.800M5.500 10.500l6.700-.2" fill="none" stroke="#1a7bb5" stroke-width="1.500"/><path d="M5.500 0 8 3.500H3zM13.800 10.300l-3.300 2.300V8zM0 15l1-4 3 3z" fill="#1a7bb5"/></svg>
<svg style="left:507px;top:94px" width="14" height="14" viewBox="0 0 14 14"><path d="M.7 .7h12.600v12.600H.7zM4.900 .7v12.600M9.100 .7v12.600M.7 4.900h12.600M.7 9.100h12.600" fill="none" stroke="#1a7bb5" stroke-width="1.300"/></svg>
<svg style="left:534px;top:94px" width="14.5" height="14" viewBox="0 0 14.5 14"><path d="M4 .8H.8V4M10.500 .8h3.200V4M4 13.200H.8V10M10.500 13.200h3.200V10" fill="none" stroke="#1a7bb5" stroke-width="1.500"/></svg>
<svg style="left:583px;top:98.5px" width="6.4" height="4" viewBox="0 0 6.4 4"><path d="M0 0h6.4L3.2 3.8z" fill="#000"/></svg>
<div style="left:597px;top:88px;width:56px;height:25.5px;background:#fff;border:1px solid #c6c8dc;"></div>
<div style="left:601px;top:92.8px;width:32px;height:16px;background:#0a0a0a;"></div>
<svg style="left:642px;top:99.5px" width="6.4" height="4" viewBox="0 0 6.4 4"><path d="M0 0h6.4L3.2 3.8z" fill="#000"/></svg>
<svg style="left:658.5px;top:92.5px" width="17" height="16.5" viewBox="0 0 17 16.5"><g fill="#cfe6f3" stroke="#1a7bb5" stroke-width="1.200"><path d="M12 .8c2.600 0 4.200 2 4.200 4.200 0 3-3 6-4.600 8.800"/><path d="M8.600 1.400c2.600 0 4.200 2 4.200 4.200 0 3-3 6.400-4.600 9"/><path d="M5 2.400C2.400 2.400.8 4.400.8 6.600c0 3 2.800 6 4.200 9 1.400-3 4.200-6 4.200-9C9.200 4.400 7.600 2.400 5 2.400z" fill="#fff"/><circle cx="5" cy="6.700" r="1.700" fill="#fff"/></g></svg>
<svg style="left:690.5px;top:92.5px" width="16" height="16.5" viewBox="0 0 16 16.5"><path d="M6 .8C3 .8 1 3 1 5.600 1 9 4.200 12 6 15.500c1.800-3.500 5-6.500 5-9.900C11 3 9 .8 6 .8z" fill="#fff" stroke="#1a7bb5" stroke-width="1.300"/><circle cx="6" cy="5.600" r="1.900" fill="none" stroke="#1a7bb5" stroke-width="1.200"/><path d="M6.500 14.500l1-3.200 5.500-5.500 2.200 2.200-5.500 5.500z" fill="#f2c443" stroke="#7a5c1a" stroke-width=".7"/><path d="M6.500 14.500l1-3.200 2.200 2.200z" fill="#444"/></svg>
<svg style="left:716.8px;top:105.8px" width="6" height="6" viewBox="0 0 6 6"><path d="M0 .5h6" stroke="#bdbdbd" stroke-width="1"/><path d="M0 2.500h6L3 5.800z" fill="#bdbdbd"/></svg>
<div style="left:208px;top:733px;width:110px;height:24px;background:#fff;border:1px solid #c6c8dc;"></div>
<svg style="left:306.5px;top:743px" width="6" height="4" viewBox="0 0 6.4 4"><path d="M0 0h6.4L3.2 3.8z" fill="#000"/></svg>
<div style="left:154.0px;top:6px;line-height:14px;white-space:nowrap;font-weight:700;color:#111;letter-spacing:-0.72px;">Setup_name</div>
<div style="left:355.3px;top:6px;line-height:14px;white-space:nowrap;color:#111;letter-spacing:-0.19px;">Start Page</div>
<div style="left:469.0px;top:6px;line-height:14px;white-space:nowrap;color:#111;letter-spacing:0.18px;">Home</div>
<div style="left:147.3px;top:35px;line-height:16px;white-space:nowrap;font-size:12px;color:#2f2f2f;letter-spacing:-0.36px;">1. Process Setup</div>
<div style="left:287.0px;top:35px;line-height:16px;white-space:nowrap;font-size:12px;color:#2f2f2f;letter-spacing:-0.10px;">2. Equipment</div>
<div style="left:411.0px;top:35px;line-height:16px;white-space:nowrap;font-size:12px;color:#2f2f2f;letter-spacing:-0.28px;">3. Calendar</div>
<div style="left:524.0px;top:35px;line-height:16px;white-space:nowrap;font-size:12px;color:#2f2f2f;letter-spacing:-0.22px;">4. Staging</div>
<div style="left:630.5px;top:35px;line-height:16px;white-space:nowrap;font-size:12px;color:#2f2f2f;letter-spacing:0.02px;">5. Mining</div>
<div style="left:724.0px;top:35px;line-height:16px;white-space:nowrap;font-size:12px;color:#2f2f2f;letter-spacing:-0.15px;">6. Constraints</div>
<div style="left:850.5px;top:35px;line-height:16px;white-space:nowrap;font-size:12px;color:#2f2f2f;letter-spacing:-0.21px;">7. Other</div>
<div style="left:947.0px;top:35px;line-height:16px;white-space:nowrap;font-size:12px;color:#2f2f2f;letter-spacing:-0.17px;">8. Viewer</div>
<div style="left:117.5px;top:65px;line-height:17px;white-space:nowrap;font-size:13.2px;font-weight:700;color:#0d4b2c;letter-spacing:0.35px;">Viewer</div>
<div style="left:217.2px;top:93px;line-height:16px;white-space:nowrap;font-size:12.3px;letter-spacing:-0.19px;">Object</div>
<div style="left:553.5px;top:93px;line-height:16px;white-space:nowrap;font-size:12.3px;letter-spacing:-0.66px;">Plan</div>
<div style="left:125.4px;top:739px;line-height:14px;white-space:nowrap;letter-spacing:0.20px;">Active Digger</div>
<div style="left:212.5px;top:739px;line-height:14px;white-space:nowrap;letter-spacing:0.25px;">None</div>
</div>
<!-- b_jobs -->
<div class="a" style="left:0;top:0">
<div class="hd" style="left:111px;top:770px;width:1361px;height:22px"></div>
<svg style="left:118px;top:774px" width="16" height="16" viewBox="0 0 16 16"><rect width="16" height="16" fill="#8abbd3"/><path d="M6.2 3.4h6.4l-.7 2.1H5.5zM5.3 7h6.4l-.7 2.1H4.6zM4.4 10.6h6.4l-.7 2.1H3.7z" fill="#fff"/></svg>
<svg style="left:1425.6px;top:777.7px" width="9" height="5" viewBox="0 0 9 5"><path d="M0 0h9L4.5 4.6z" fill="#3b4a54"/></svg>
<svg style="left:1442.2px;top:772.6px" width="7" height="11" viewBox="0 0 7 11"><path d="M1.500 .5h4M2.200 .5v5.700M.3 6.200h6.400M3.500 6.200v4.600" stroke="#3b4a54" stroke-width="1" fill="none"/><path d="M4.700 .5v5.700" stroke="#3b4a54" stroke-width="1.700"/></svg>
<svg style="left:1458px;top:774px" width="8.5" height="8.5" viewBox="0 0 9 9"><path d="M.7 .7l7.6 7.6M8.3 .7L.7 8.3" stroke="#3b4a54" stroke-width="1.3" fill="none"/></svg>
<svg style="left:114.8px;top:799.6px" width="17" height="17" viewBox="0 0 16 16"><path d="M13.800 5.200A6.200 6.200 0 0 0 2.400 6.600M2.200 10.800A6.200 6.200 0 0 0 13.600 9.400" fill="none" stroke="#1a7bb5" stroke-width="2.200"/><path d="M15.600 2.200v4.800h-4.800zM.4 13.800V9h4.800z" fill="#1a7bb5"/></svg>
<div style="left:138px;top:797px;width:1px;height:24px;background:#c6c6cc;"></div>
<svg style="left:145.5px;top:801px" width="17" height="13" viewBox="0 0 16 12"><path d="M0 2h5l1.500 1.500H11V12H0z" fill="#bcd9ea"/><path d="M1.500 5.500h10L10 12H0z" fill="#a9cfe5"/><path d="M10 3.500h4M12.500 1.500l2 2-2 2" fill="none" stroke="#a9cfe5" stroke-width="1.300"/></svg>
<svg style="left:171.7px;top:799.7px" width="17" height="17" viewBox="0 0 16 16"><circle cx="8" cy="8" r="7.600" fill="#f3c5c8"/><path d="M5 5l6 6M11 5l-6 6" stroke="#fbeaea" stroke-width="2.400"/></svg>
<svg style="left:197.5px;top:800.5px" width="16.5" height="15.5" viewBox="0 0 16 15.500"><path d="M8 .5v9.500M4.200 6.500 8 10.200l3.800-3.700M.7 11v3.800h14.600V11" fill="none" stroke="#bcd9ea" stroke-width="1.200"/></svg>
<svg style="left:224px;top:802px" width="16" height="12" viewBox="0 0 16 12"><path d="M9.500 0 16 5.500 9.500 11V7.600C5 7.400 2 8.800 0 12c.4-5 3.500-8.300 9.500-8.600z" fill="#bcd9ea"/></svg>
<svg style="left:250.5px;top:802px" width="15" height="12" viewBox="0 0 15 12"><path d="M.5 6C3 2.500 5 1.500 7.500 1.500S12 2.500 14.500 6C12 9.500 10 10.500 7.500 10.500S3 9.500.5 6z" fill="none" stroke="#cfe3ee" stroke-width="1.100"/><circle cx="7.500" cy="6" r="2" fill="none" stroke="#cfe3ee"/><path d="M2 11.500 13 .5" stroke="#f1c9cb" stroke-width="1.400"/></svg>
<div style="left:273px;top:797px;width:1px;height:24px;background:#c6c6cc;"></div>
<svg style="left:283px;top:801px" width="12" height="13" viewBox="0 0 12 13"><path d="M6 .3 11.700 2.200v4.300C11.700 9.800 9.300 11.700 6 12.800 2.700 11.700.3 9.800.3 6.500V2.200z" fill="#1d8f3c"/><path d="M3.200 6.200l2.200 2.200 3.800-4" fill="none" stroke="#fff" stroke-width="1.700"/></svg>
<svg style="left:390.4px;top:801.5px" width="13" height="13" viewBox="0 0 13 13"><circle cx="6.500" cy="6.500" r="5.900" fill="#fff" stroke="#9cc4dc" stroke-width="1"/><path d="M4.700 3.700v5.600l4.600-2.800z" fill="#1a7bb5"/></svg>
<div style="left:1299px;top:797px;width:79px;height:22px;background:#fff;border:1px solid #c6c8dc;"></div>
<svg style="left:1367px;top:806px" width="6" height="4" viewBox="0 0 6.4 4"><path d="M0 0h6.4L3.2 3.8z" fill="#000"/></svg>
<svg style="left:1452.8px;top:801.5px" width="15" height="14" viewBox="0 0 15 14"><path d="M1 0v12.500h13" fill="none" stroke="#1a7bb5" stroke-width="1.200"/><path d="M1 10 5.500 4 9 8l4-6.500" fill="none" stroke="#6bb0d6" stroke-width="1.200"/><path d="M10.500 5.500h2.500v7h-2.500z" fill="#9ccbe2" stroke="#6bb0d6" stroke-width=".6"/></svg>
<div style="left:111px;top:823px;width:1360px;height:29px;background:#fff;border:1px solid #c6c8dc;border-left:0;border-bottom:2px solid #c6c8dc;"></div>
<div style="left:152px;top:824px;width:1px;height:27px;background:#c6c8dc;"></div>
<div style="left:194px;top:824px;width:1px;height:27px;background:#c6c8dc;"></div>
<div style="left:261px;top:824px;width:1px;height:27px;background:#c6c8dc;"></div>
<div style="left:304px;top:824px;width:1px;height:27px;background:#c6c8dc;"></div>
<div style="left:111px;top:957px;width:1361px;height:29px;background:#c5c3c2;"></div>
<div style="left:111px;top:957px;width:77px;height:26px;background:#fff;box-shadow:1px 0 0 #9a9aa8;"></div>
<div style="left:111px;top:983px;width:77px;height:1px;background:#a9a9b5;"></div>
<div style="left:188.5px;top:958px;width:89.5px;height:23px;background:linear-gradient(#f3f3f3,#e2e2e2 45%,#d2d2d2 50%,#e6e6e6);border-right:1px solid #8e8e9a;"></div>
<svg style="left:194.5px;top:962px" width="16" height="16" viewBox="0 0 16 16"><rect width="16" height="16" fill="#8abbd3"/><path d="M6.2 3.4h6.4l-.7 2.1H5.5zM5.3 7h6.4l-.7 2.1H4.6zM4.4 10.6h6.4l-.7 2.1H3.7z" fill="#fff"/></svg>
<svg style="left:260.7px;top:966.5px" width="8" height="8" viewBox="0 0 8 8"><path d="M1 1l6 6M7 1l-6 6" stroke="#666" stroke-width="1.8" fill="none"/><path d="M2.5 4h3M4 2.5v3" stroke="#666" stroke-width="1.6"/></svg>
<div style="left:279px;top:958px;width:129px;height:23px;background:linear-gradient(#f3f3f3,#e2e2e2 45%,#d2d2d2 50%,#e6e6e6);border-right:1px solid #8e8e9a;"></div>
<svg style="left:286.6px;top:962px" width="16" height="16" viewBox="0 0 16 16"><rect width="16" height="16" fill="#8abbd3"/><path d="M6.2 3.4h6.4l-.7 2.1H5.5zM5.3 7h6.4l-.7 2.1H4.6zM4.4 10.6h6.4l-.7 2.1H3.7z" fill="#fff"/></svg>
<svg style="left:389.3px;top:966.5px" width="8" height="8" viewBox="0 0 8 8"><path d="M1 1l6 6M7 1l-6 6" stroke="#666" stroke-width="1.8" fill="none"/><path d="M2.5 4h3M4 2.5v3" stroke="#666" stroke-width="1.6"/></svg>
<div style="left:409px;top:958px;width:128px;height:23px;background:linear-gradient(#f3f3f3,#e2e2e2 45%,#d2d2d2 50%,#e6e6e6);border-right:1px solid #8e8e9a;"></div>
<svg style="left:415.6px;top:962px" width="16" height="16" viewBox="0 0 16 16"><rect width="16" height="16" fill="#8abbd3"/><path d="M6.2 3.4h6.4l-.7 2.1H5.5zM5.3 7h6.4l-.7 2.1H4.6zM4.4 10.6h6.4l-.7 2.1H3.7z" fill="#fff"/></svg>
<svg style="left:518.3px;top:966.5px" width="8" height="8" viewBox="0 0 8 8"><path d="M1 1l6 6M7 1l-6 6" stroke="#666" stroke-width="1.8" fill="none"/><path d="M2.5 4h3M4 2.5v3" stroke="#666" stroke-width="1.6"/></svg>
<div style="left:538px;top:958px;width:83px;height:23px;background:linear-gradient(#f3f3f3,#e2e2e2 45%,#d2d2d2 50%,#e6e6e6);border-right:1px solid #8e8e9a;"></div>
<svg style="left:544.6px;top:962px" width="16" height="16" viewBox="0 0 16 16"><rect width="16" height="16" fill="#8abbd3"/><path d="M6.2 3.4h6.4l-.7 2.1H5.5zM5.3 7h6.4l-.7 2.1H4.6zM4.4 10.6h6.4l-.7 2.1H3.7z" fill="#fff"/></svg>
<svg style="left:601.8px;top:966.5px" width="8" height="8" viewBox="0 0 8 8"><path d="M1 1l6 6M7 1l-6 6" stroke="#666" stroke-width="1.8" fill="none"/><path d="M2.5 4h3M4 2.5v3" stroke="#666" stroke-width="1.6"/></svg>
<svg style="left:117px;top:960px" width="16" height="16" viewBox="0 0 16 16"><rect width="16" height="16" fill="#8abbd3"/><path d="M6.2 3.4h6.4l-.7 2.1H5.5zM5.3 7h6.4l-.7 2.1H4.6zM4.4 10.6h6.4l-.7 2.1H3.7z" fill="#fff"/></svg>
<svg style="left:168px;top:964.5px" width="8" height="8" viewBox="0 0 8 8"><path d="M1 1l6 6M7 1l-6 6" stroke="#666" stroke-width="1.8" fill="none"/><path d="M2.5 4h3M4 2.5v3" stroke="#666" stroke-width="1.6"/></svg>
<div style="left:138.0px;top:776px;line-height:14px;white-space:nowrap;letter-spacing:-0.32px;">Jobs</div>
<div style="left:303.2px;top:801px;line-height:14px;white-space:nowrap;letter-spacing:0.10px;">Validate Setup</div>
<div style="left:411.0px;top:801px;line-height:14px;white-space:nowrap;letter-spacing:-0.20px;">Run</div>
<div style="left:1252.7px;top:802px;line-height:14px;white-space:nowrap;letter-spacing:0.31px;">Sort by</div>
<div style="left:1303.0px;top:802px;line-height:14px;white-space:nowrap;letter-spacing:0.36px;">Submitted</div>
<div style="left:1386.0px;top:802px;line-height:14px;white-space:nowrap;letter-spacing:0.15px;">Connected</div>
<div style="left:118.9px;top:831px;line-height:14px;white-space:nowrap;font-weight:700;color:#111;letter-spacing:0.12px;">Type</div>
<div style="left:164.0px;top:831px;line-height:14px;white-space:nowrap;font-weight:700;color:#111;letter-spacing:-0.15px;">Job</div>
<div style="left:199.0px;top:831px;line-height:14px;white-space:nowrap;font-weight:700;color:#111;letter-spacing:0.26px;">Submitted</div>
<div style="left:266.0px;top:831px;line-height:14px;white-space:nowrap;font-weight:700;color:#111;letter-spacing:-0.03px;">Status</div>
<div style="left:214.4px;top:963px;line-height:14px;white-space:nowrap;color:#111;letter-spacing:0.33px;">Output</div>
<div style="left:307.3px;top:963px;line-height:14px;white-space:nowrap;color:#111;letter-spacing:0.18px;">Road Network</div>
<div style="left:436.3px;top:963px;line-height:14px;white-space:nowrap;color:#111;letter-spacing:0.08px;">Dependencies</div>
<div style="left:565.3px;top:963px;line-height:14px;white-space:nowrap;color:#111;letter-spacing:0.27px;">Gantt</div>
<div style="left:137.0px;top:961px;line-height:14px;white-space:nowrap;color:#111;letter-spacing:-0.32px;">Jobs</div>
</div>
<!-- b_vm -->
<div class="a" style="left:0;top:0">
<div class="hd" style="left:1477px;top:2px;width:272px;height:18px"></div>
<div style="left:1748px;top:2px;width:1px;height:984px;background:#fafafa;"></div>
<svg style="left:1486px;top:2px" width="16" height="16" viewBox="0 0 16 16"><rect width="16" height="16" fill="#8abbd3"/><path d="M6.2 3.4h6.4l-.7 2.1H5.5zM5.3 7h6.4l-.7 2.1H4.6zM4.4 10.6h6.4l-.7 2.1H3.7z" fill="#fff"/></svg>
<svg style="left:1704.5px;top:6px" width="9" height="5" viewBox="0 0 9 5"><path d="M0 0h9L4.5 4.6z" fill="#3b4a54"/></svg>
<svg style="left:1721.6px;top:1.5px" width="7" height="11" viewBox="0 0 7 11"><path d="M1.500 .5h4M2.200 .5v5.700M.3 6.200h6.400M3.500 6.200v4.600" stroke="#3b4a54" stroke-width="1" fill="none"/><path d="M4.700 .5v5.700" stroke="#3b4a54" stroke-width="1.700"/></svg>
<svg style="left:1737px;top:3px" width="8.5" height="8.5" viewBox="0 0 9 9"><path d="M.7 .7l7.6 7.6M8.3 .7L.7 8.3" stroke="#3b4a54" stroke-width="1.3" fill="none"/></svg>
<div style="left:1479px;top:22px;width:270px;height:26px;background:#fff;"></div>
<div style="left:1486.5px;top:34px;width:11px;height:2px;background:#f0bcc0;"></div>
<svg style="left:1510px;top:29.4px" width="16" height="11" viewBox="0 0 16 11"><rect x=".5" y=".5" width="15" height="10" rx="1" fill="#a9cbe0" stroke="#8fb6cf"/><rect x="2" y="2" width="12" height="7" fill="#c9dff0"/><circle cx="8" cy="5.500" r="2.600" fill="#777"/><circle cx="8" cy="5.500" r="1.200" fill="#444"/><rect x="12" y="2" width="1.500" height="1.200" fill="#b55"/></svg>
<svg style="left:1536.6px;top:30.5px" width="15" height="10" viewBox="0 0 15 10"><path d="M.6 5C3 1.600 5.200 .7 7.500 .7S12 1.600 14.400 5C12 8.400 9.800 9.300 7.500 9.300S3 8.400.6 5z" fill="#fff" stroke="#1a7bb5" stroke-width="1.200"/><circle cx="7.500" cy="5" r="2.700" fill="none" stroke="#1a7bb5" stroke-width="1.200"/><circle cx="7.500" cy="5" r="1" fill="#1a7bb5"/></svg>
<svg style="left:1562.8px;top:30.5px" width="15" height="10" viewBox="0 0 15 10"><path d="M.6 5C3 1.600 5.200 .7 7.500 .7S12 1.600 14.400 5C12 8.400 9.800 9.300 7.500 9.300S3 8.400.6 5z" fill="#fff" stroke="#1a7bb5" stroke-width="1.200"/><circle cx="7.500" cy="5" r="2.700" fill="none" stroke="#1a7bb5" stroke-width="1.200"/><circle cx="7.500" cy="5" r="1" fill="#1a7bb5"/><path d="M2.200 10.200 12.800 -.4" stroke="#d3202a" stroke-width="2"/></svg>
<svg style="left:1738.8px;top:37px" width="6" height="6" viewBox="0 0 6 6"><path d="M0 .5h6" stroke="#bdbdbd" stroke-width="1"/><path d="M0 2.500h6L3 5.800z" fill="#bdbdbd"/></svg>
<div style="left:1480px;top:50px;width:269px;height:22px;background:#fff;border:1px solid #c6c8dc;border-right:0;"></div>
<div style="left:1480px;top:73px;width:269px;height:245px;background:#fff;"></div>
<div style="left:1480px;top:100px;width:250px;height:1px;background:#c6c8dc;"></div>
<div style="left:1501px;top:73px;width:1px;height:27px;background:#c6c8dc;"></div>
<div style="left:1615px;top:73px;width:1px;height:27px;background:#c6c8dc;"></div>
<div style="left:1729px;top:73px;width:1px;height:27px;background:#c6c8dc;"></div>
<svg style="left:1736px;top:79px" width="8" height="5" viewBox="0 0 8 5"><path d="M0 5h8L4 0z" fill="#000"/></svg>
<div style="left:1735px;top:90px;width:9px;height:94px;background:#c9c9d6;"></div>
<svg style="left:1736px;top:304.5px" width="8" height="5" viewBox="0 0 8 5"><path d="M0 0h8L4 5z" fill="#000"/></svg>
<div style="left:1500px;top:125px;width:233px;height:1px;background:#c6c8dc;"></div>
<div style="left:1480px;top:149.5px;width:253px;height:1px;background:#c6c8dc;"></div>
<div style="left:1500px;top:175px;width:233px;height:1px;background:#c6c8dc;"></div>
<div style="left:1480px;top:199px;width:253px;height:1px;background:#c6c8dc;"></div>
<div style="left:1500px;top:225px;width:233px;height:1px;background:#c6c8dc;"></div>
<div style="left:1500px;top:249.5px;width:233px;height:1px;background:#c6c8dc;"></div>
<div style="left:1480px;top:273.5px;width:253px;height:1px;background:#c6c8dc;"></div>
<div style="left:1500px;top:299.5px;width:233px;height:1px;background:#c6c8dc;"></div>
<div style="left:1500px;top:125px;width:1px;height:24.5px;background:#c6c8dc;"></div>
<div style="left:1500px;top:175px;width:1px;height:24px;background:#c6c8dc;"></div>
<div style="left:1500px;top:225px;width:1px;height:48.5px;background:#c6c8dc;"></div>
<div style="left:1500px;top:299.5px;width:1px;height:18.5px;background:#c6c8dc;"></div>
<svg style="left:1487.5px;top:111.2px" width="6" height="4" viewBox="0 0 6 4"><path d="M0 4h6L3 0z" fill="#000"/></svg>
<svg style="left:1506.3px;top:108.7px" width="15" height="10" viewBox="0 0 15 10"><path d="M.6 5C3 1.600 5.200 .7 7.500 .7S12 1.600 14.400 5C12 8.400 9.800 9.300 7.500 9.300S3 8.400.6 5z" fill="#fff" stroke="#1a7bb5" stroke-width="1.200"/><circle cx="7.500" cy="5" r="2.700" fill="none" stroke="#1a7bb5" stroke-width="1.200"/><circle cx="7.500" cy="5" r="1" fill="#1a7bb5"/></svg>
<svg style="left:1530.3px;top:105.7px" width="16" height="16" viewBox="0 0 16 16"><path d="M1 9.500h3.500l1 2h5l1-2H15l-2 5.500H3z" fill="#fff" stroke="#777" stroke-width="1"/><path d="M4 2.500 9 1l4 1.500v5.500L8 10 4 8z" fill="#8cc3e2" stroke="#4e9ac7" stroke-width=".8"/><path d="M4 2.500l4 1.700 5-1.700M8 4.200V10" stroke="#d9eef9" stroke-width=".8" fill="none"/></svg>
<svg style="left:1533px;top:133.6px" width="15" height="10" viewBox="0 0 15 10"><path d="M.6 5C3 1.600 5.200 .7 7.500 .7S12 1.600 14.400 5C12 8.400 9.800 9.300 7.500 9.300S3 8.400.6 5z" fill="#fff" stroke="#1a7bb5" stroke-width="1.200"/><circle cx="7.500" cy="5" r="2.700" fill="none" stroke="#1a7bb5" stroke-width="1.200"/><circle cx="7.500" cy="5" r="1" fill="#1a7bb5"/></svg>
<svg style="left:1487.5px;top:161px" width="6" height="4" viewBox="0 0 6 4"><path d="M0 4h6L3 0z" fill="#000"/></svg>
<svg style="left:1506.3px;top:158.5px" width="15" height="10" viewBox="0 0 15 10"><path d="M.6 5C3 1.600 5.200 .7 7.500 .7S12 1.600 14.400 5C12 8.400 9.800 9.300 7.500 9.300S3 8.400.6 5z" fill="#fff" stroke="#1a7bb5" stroke-width="1.200"/><circle cx="7.500" cy="5" r="2.700" fill="none" stroke="#1a7bb5" stroke-width="1.200"/><circle cx="7.500" cy="5" r="1" fill="#1a7bb5"/></svg>
<svg style="left:1530.3px;top:155.5px" width="16" height="16" viewBox="0 0 16 16"><path d="M1.500 15 5 9.500h6L14.500 15z" fill="#5aa94a" stroke="#3e8a32" stroke-width=".8"/><path d="M4 2.500 9 1l4 1.500v5.500L8 10 4 8z" fill="#a9d4ec" stroke="#4e9ac7" stroke-width=".8"/><path d="M4 2.500l4 1.700 5-1.700M8 4.200V10" stroke="#e6f4fb" stroke-width=".8" fill="none"/></svg>
<svg style="left:1533px;top:183.4px" width="15" height="10" viewBox="0 0 15 10"><path d="M.6 5C3 1.600 5.200 .7 7.500 .7S12 1.600 14.400 5C12 8.400 9.800 9.300 7.500 9.300S3 8.400.6 5z" fill="#fff" stroke="#1a7bb5" stroke-width="1.200"/><circle cx="7.500" cy="5" r="2.700" fill="none" stroke="#1a7bb5" stroke-width="1.200"/><circle cx="7.500" cy="5" r="1" fill="#1a7bb5"/></svg>
<svg style="left:1487.5px;top:210.8px" width="6" height="4" viewBox="0 0 6 4"><path d="M0 4h6L3 0z" fill="#000"/></svg>
<svg style="left:1506.3px;top:208.3px" width="15" height="10" viewBox="0 0 15 10"><path d="M.6 5C3 1.600 5.200 .7 7.500 .7S12 1.600 14.400 5C12 8.400 9.800 9.300 7.500 9.300S3 8.400.6 5z" fill="#fff" stroke="#1a7bb5" stroke-width="1.200"/><circle cx="7.500" cy="5" r="2.700" fill="none" stroke="#1a7bb5" stroke-width="1.200"/><circle cx="7.500" cy="5" r="1" fill="#1a7bb5"/><path d="M2.200 10.200 12.800 -.4" stroke="#d3202a" stroke-width="2"/></svg>
<svg style="left:1530.3px;top:205.3px" width="16" height="16" viewBox="0 0 16 16"><path d="M1 5h9v8H1z" fill="#fff" stroke="#1a7bb5" stroke-width="1.200"/><path d="M3 2h6l1 3H2z" fill="#cfe6f3" stroke="#1a7bb5" stroke-width="1"/><path d="M10 7h4.500v6H10z" fill="#cfe6f3" stroke="#1a7bb5" stroke-width="1.100"/><path d="M1 10h9" stroke="#1a7bb5" stroke-width="1"/><circle cx="4" cy="13.500" r="1.600" fill="#555"/><circle cx="11.500" cy="13.500" r="1.600" fill="#555"/><path d="M11.500 8.500h2v2.500h-2z" fill="#666"/></svg>
<svg style="left:1533px;top:233px" width="15" height="10" viewBox="0 0 15 10"><path d="M.6 5C3 1.600 5.200 .7 7.500 .7S12 1.600 14.400 5C12 8.400 9.800 9.300 7.500 9.300S3 8.400.6 5z" fill="#fff" stroke="#1a7bb5" stroke-width="1.200"/><circle cx="7.500" cy="5" r="2.700" fill="none" stroke="#1a7bb5" stroke-width="1.200"/><circle cx="7.500" cy="5" r="1" fill="#1a7bb5"/><path d="M2.200 10.200 12.800 -.4" stroke="#d3202a" stroke-width="2"/></svg>
<svg style="left:1533px;top:257.3px" width="15" height="10" viewBox="0 0 15 10"><path d="M.6 5C3 1.600 5.200 .7 7.500 .7S12 1.600 14.400 5C12 8.400 9.800 9.300 7.500 9.300S3 8.400.6 5z" fill="#fff" stroke="#1a7bb5" stroke-width="1.200"/><circle cx="7.500" cy="5" r="2.700" fill="none" stroke="#1a7bb5" stroke-width="1.200"/><circle cx="7.500" cy="5" r="1" fill="#1a7bb5"/><path d="M2.200 10.200 12.800 -.4" stroke="#d3202a" stroke-width="2"/></svg>
<svg style="left:1487.5px;top:284.7px" width="6" height="4" viewBox="0 0 6 4"><path d="M0 4h6L3 0z" fill="#000"/></svg>
<svg style="left:1506.3px;top:282.2px" width="15" height="10" viewBox="0 0 15 10"><path d="M.6 5C3 1.600 5.200 .7 7.500 .7S12 1.600 14.400 5C12 8.400 9.800 9.300 7.500 9.300S3 8.400.6 5z" fill="#fff" stroke="#1a7bb5" stroke-width="1.200"/><circle cx="7.500" cy="5" r="2.700" fill="none" stroke="#1a7bb5" stroke-width="1.200"/><circle cx="7.500" cy="5" r="1" fill="#1a7bb5"/></svg>
<svg style="left:1530.3px;top:279.2px" width="16" height="16" viewBox="0 0 16 16"><path d="M5 .5h9L8.500 7H13L2 15.500 5.500 8.500H1.500z" fill="#2d8bc0"/><path d="M5 .5h9L8.500 7H13L2 15.500" fill="none" stroke="#9ccbe2" stroke-width="1"/></svg>
<svg style="left:1533px;top:306.8px" width="15" height="10" viewBox="0 0 15 10"><path d="M.6 5C3 1.600 5.200 .7 7.500 .7S12 1.600 14.400 5C12 8.400 9.800 9.300 7.500 9.300S3 8.400.6 5z" fill="#fff" stroke="#1a7bb5" stroke-width="1.200"/><circle cx="7.500" cy="5" r="2.700" fill="none" stroke="#1a7bb5" stroke-width="1.200"/><circle cx="7.500" cy="5" r="1" fill="#1a7bb5"/></svg>
<div style="left:1478px;top:318px;width:271px;height:5px;background:#dedede;"></div>
<svg style="left:1607px;top:320.5px" width="14" height="2" viewBox="0 0 14 2"><path d="M0 1h2M4 1h2M8 1h2M12 1h2" stroke="#222" stroke-width="1.600"/></svg>
<div style="left:1477px;top:323px;width:272px;height:167px;background:#f0f0f0;"></div>
<svg style="left:1509px;top:354.5px" width="16" height="16" viewBox="0 0 16 16"><path d="M1 9.500h3.500l1 2h5l1-2H15l-2 5.500H3z" fill="#fff" stroke="#777" stroke-width="1"/><path d="M4 2.500 9 1l4 1.500v5.500L8 10 4 8z" fill="#8cc3e2" stroke="#4e9ac7" stroke-width=".8"/><path d="M4 2.500l4 1.700 5-1.700M8 4.200V10" stroke="#d9eef9" stroke-width=".8" fill="none"/></svg>
<svg style="left:1484.3px;top:399.7px" width="21" height="21" viewBox="0 0 21 21"><circle cx="10.500" cy="10.500" r="10" fill="#fff" stroke="#d3d3e3" stroke-width="1"/><path d="M7.500 12.300h6l-3-4z" fill="#000"/></svg>
<svg style="left:1484.3px;top:458.7px" width="21" height="21" viewBox="0 0 21 21"><circle cx="10.500" cy="10.500" r="10" fill="#fff" stroke="#d3d3e3" stroke-width="1"/><path d="M7.500 9h6l-3 4z" fill="#000"/></svg>
<svg style="left:1513px;top:403px" width="13" height="15" viewBox="0 0 13 15"><path d="M.3 .5h12.400L8 6.500V14l-3.200-2V6.500z" fill="#1a7bb5"/></svg>
<svg style="left:1510.5px;top:463.5px" width="17" height="11" viewBox="0 0 17 11"><rect x=".8" y=".8" width="15.400" height="9.400" rx="4.700" fill="#fff" stroke="#1a7bb5" stroke-width="1.500"/><path d="M4 5.500c0-1 .8-1.700 1.800-1.700h2.400M13 5.500c0 1-.8 1.700-1.800 1.700H8.800M6.500 5.500h4" fill="none" stroke="#1a7bb5" stroke-width="1.400"/></svg>
<div style="left:1506.4px;top:4px;line-height:14px;white-space:nowrap;letter-spacing:0.17px;">View Manager</div>
<div style="left:1486.0px;top:54px;line-height:16px;white-space:nowrap;font-size:12px;font-style:italic;color:#7a7a7a;letter-spacing:-0.07px;">Filter by Name</div>
<div style="left:1506.3px;top:80px;line-height:14px;white-space:nowrap;font-weight:700;color:#111;letter-spacing:0.49px;">Name</div>
<div style="left:1620.3px;top:80px;line-height:14px;white-space:nowrap;font-weight:700;color:#111;letter-spacing:0.17px;">Type</div>
<div style="left:1557.2px;top:107px;line-height:14px;white-space:nowrap;color:#111;letter-spacing:0.08px;">Block Pit</div>
<div style="left:1557.2px;top:132px;line-height:14px;white-space:nowrap;color:#111;letter-spacing:0.34px;width:55px;overflow:hidden;">Pit Model</div>
<div style="left:1619.2px;top:132px;line-height:14px;white-space:nowrap;color:#111;letter-spacing:0.08px;">Block Pit</div>
<div style="left:1557.2px;top:157px;line-height:14px;white-space:nowrap;color:#111;letter-spacing:0.19px;">Block Waste Utility</div>
<div style="left:1557.2px;top:182px;line-height:14px;white-space:nowrap;color:#111;letter-spacing:0.45px;width:55px;overflow:hidden;">Dump</div>
<div style="left:1619.2px;top:182px;line-height:14px;white-space:nowrap;color:#111;letter-spacing:0.19px;">Block Waste Utility</div>
<div style="left:1557.2px;top:207px;line-height:14px;white-space:nowrap;color:#111;letter-spacing:0.27px;">Digger</div>
<div style="left:1557.2px;top:231px;line-height:14px;white-space:nowrap;color:#111;letter-spacing:-0.24px;width:55px;overflow:hidden;">CAT6015B</div>
<div style="left:1619.2px;top:231px;line-height:14px;white-space:nowrap;color:#111;letter-spacing:0.27px;">Digger</div>
<div style="left:1557.2px;top:256px;line-height:14px;white-space:nowrap;color:#111;letter-spacing:0.03px;width:55px;overflow:hidden;">Stockpile (</div>
<div style="left:1619.2px;top:256px;line-height:14px;white-space:nowrap;color:#111;letter-spacing:0.27px;">Digger</div>
<div style="left:1557.2px;top:280px;line-height:14px;white-space:nowrap;color:#111;letter-spacing:0.22px;">Road Network</div>
<div style="left:1557.2px;top:305px;line-height:14px;white-space:nowrap;color:#111;letter-spacing:-0.04px;width:55px;overflow:hidden;">Road Netv</div>
<div style="left:1619.2px;top:305px;line-height:14px;white-space:nowrap;color:#111;letter-spacing:0.22px;">Road Network</div>
<div style="left:1481.5px;top:329px;line-height:14px;white-space:nowrap;color:#555;letter-spacing:-0.02px;">Visual</div>
<div style="left:1533.6px;top:354px;line-height:16px;white-space:nowrap;font-size:12px;font-weight:700;color:#111;letter-spacing:0.10px;">Pit Model</div>
<div style="left:1481.5px;top:379px;line-height:14px;white-space:nowrap;color:#555;letter-spacing:0.27px;">Attached Components</div>
<div style="left:1535.6px;top:404px;line-height:14px;white-space:nowrap;color:#111;letter-spacing:0.31px;">Attribute Filter</div>
<div style="left:1536.3px;top:432px;line-height:14px;white-space:nowrap;color:#111;letter-spacing:0.17px;">bench</div>
<div style="left:1535.6px;top:463px;line-height:14px;white-space:nowrap;color:#111;letter-spacing:0.11px;">Dependency Visual Container</div>
</div>
<!-- b_props -->
<div class="a" style="left:0;top:0">
<div style="left:1477px;top:490px;width:272px;height:4px;background:#aaa8a8;"></div>
<div class="hd" style="left:1477px;top:494px;width:272px;height:24px"></div>
<svg style="left:1486px;top:498px" width="16" height="16" viewBox="0 0 16 16"><rect width="16" height="16" fill="#8abbd3"/><path d="M6.2 3.4h6.4l-.7 2.1H5.5zM5.3 7h6.4l-.7 2.1H4.6zM4.4 10.6h6.4l-.7 2.1H3.7z" fill="#fff"/></svg>
<svg style="left:1704.5px;top:501.7px" width="9" height="5" viewBox="0 0 9 5"><path d="M0 0h9L4.5 4.6z" fill="#3b4a54"/></svg>
<svg style="left:1721.6px;top:497px" width="7" height="11" viewBox="0 0 7 11"><path d="M1.500 .5h4M2.200 .5v5.700M.3 6.200h6.400M3.500 6.200v4.600" stroke="#3b4a54" stroke-width="1" fill="none"/><path d="M4.700 .5v5.700" stroke="#3b4a54" stroke-width="1.700"/></svg>
<svg style="left:1737px;top:499px" width="8.5" height="8.5" viewBox="0 0 9 9"><path d="M.7 .7l7.6 7.6M8.3 .7L.7 8.3" stroke="#3b4a54" stroke-width="1.3" fill="none"/></svg>
<div style="left:1477px;top:518px;width:272px;height:20px;background:#f0f0f0;"></div>
<div style="left:1479px;top:518px;width:40px;height:20px;background:#dcecf5;"></div>
<div style="left:1479px;top:538px;width:270px;height:2px;background:#3d3d3d;"></div>
<div style="left:1477px;top:540px;width:272px;height:26px;background:#f0f0f0;"></div>
<div style="left:1479px;top:566px;width:270px;height:420px;background:#fff;"></div>
<div style="left:1481px;top:566px;width:1px;height:26px;background:#c6c8dc;"></div>
<div style="left:1481px;top:566px;width:252px;height:1px;background:#c6c8dc;"></div>
<div style="left:1481px;top:591px;width:252px;height:1px;background:#c6c8dc;"></div>
<div style="left:1592.5px;top:566px;width:1px;height:25px;background:#c6c8dc;"></div>
<div style="left:1702px;top:566px;width:1px;height:25px;background:#c6c8dc;"></div>
<svg style="left:1735.6px;top:571.5px" width="8" height="5" viewBox="0 0 8 5"><path d="M0 5h8L4 0z" fill="#000"/></svg>
<div style="left:1735px;top:582px;width:9px;height:80px;background:#c9c9d6;"></div>
<svg style="left:1735.6px;top:972px" width="8" height="5" viewBox="0 0 8 5"><path d="M0 0h8L4 5z" fill="#000"/></svg>
<div style="left:1481px;top:613px;width:252px;height:1px;background:#c6c8dc;"></div>
<div style="left:1481px;top:635px;width:252px;height:1px;background:#c6c8dc;"></div>
<div style="left:1639px;top:618px;width:13px;height:13px;background:#fff;border:1px solid #b9b9c9;"></div>
<div style="left:1481px;top:657px;width:252px;height:1px;background:#c6c8dc;"></div>
<div style="left:1481px;top:679px;width:252px;height:1px;background:#c6c8dc;"></div>
<div style="left:1481px;top:701px;width:252px;height:1px;background:#c6c8dc;"></div>
<div style="left:1481px;top:723px;width:252px;height:1px;background:#c6c8dc;"></div>
<svg style="left:1711.5px;top:709px" width="10" height="8" viewBox="0 0 10 8"><path d="M0 4h3.500M3.500 .8v6.400M3.500 2.200h3.200l.8-.7H10v5H7.500l-.8-.7H3.500z" fill="#222" stroke="#222" stroke-width=".9"/></svg>
<div style="left:1481px;top:745px;width:252px;height:1px;background:#c6c8dc;"></div>
<svg style="left:1711.5px;top:731px" width="10" height="8" viewBox="0 0 10 8"><path d="M0 4h3.500M3.500 .8v6.400M3.500 2.200h3.200l.8-.7H10v5H7.500l-.8-.7H3.500z" fill="#222" stroke="#222" stroke-width=".9"/></svg>
<div style="left:1481px;top:767px;width:252px;height:1px;background:#c6c8dc;"></div>
<svg style="left:1711.5px;top:753px" width="10" height="8" viewBox="0 0 10 8"><path d="M0 4h3.500M3.500 .8v6.400M3.500 2.200h3.200l.8-.7H10v5H7.500l-.8-.7H3.500z" fill="#222" stroke="#222" stroke-width=".9"/></svg>
<div style="left:1481px;top:789px;width:252px;height:1px;background:#c6c8dc;"></div>
<svg style="left:1711.5px;top:775px" width="10" height="8" viewBox="0 0 10 8"><path d="M0 4h3.500M3.500 .8v6.400M3.500 2.200h3.200l.8-.7H10v5H7.500l-.8-.7H3.500z" fill="#222" stroke="#222" stroke-width=".9"/></svg>
<div style="left:1481px;top:811px;width:252px;height:1px;background:#c6c8dc;"></div>
<svg style="left:1711.5px;top:797px" width="10" height="8" viewBox="0 0 10 8"><path d="M0 4h3.500M3.500 .8v6.400M3.500 2.200h3.200l.8-.7H10v5H7.500l-.8-.7H3.500z" fill="#222" stroke="#222" stroke-width=".9"/></svg>
<div style="left:1481px;top:833px;width:252px;height:1px;background:#c6c8dc;"></div>
<svg style="left:1711.5px;top:819px" width="10" height="8" viewBox="0 0 10 8"><path d="M0 4h3.500M3.500 .8v6.400M3.500 2.200h3.200l.8-.7H10v5H7.500l-.8-.7H3.500z" fill="#222" stroke="#222" stroke-width=".9"/></svg>
<div style="left:1481px;top:855px;width:252px;height:1px;background:#c6c8dc;"></div>
<svg style="left:1711.5px;top:841px" width="10" height="8" viewBox="0 0 10 8"><path d="M0 4h3.500M3.500 .8v6.400M3.500 2.200h3.200l.8-.7H10v5H7.500l-.8-.7H3.500z" fill="#222" stroke="#222" stroke-width=".9"/></svg>
<div style="left:1481px;top:877px;width:252px;height:1px;background:#c6c8dc;"></div>
<svg style="left:1711.5px;top:863px" width="10" height="8" viewBox="0 0 10 8"><path d="M0 4h3.500M3.500 .8v6.400M3.500 2.200h3.200l.8-.7H10v5H7.500l-.8-.7H3.500z" fill="#222" stroke="#222" stroke-width=".9"/></svg>
<div style="left:1481px;top:899px;width:252px;height:1px;background:#c6c8dc;"></div>
<svg style="left:1711.5px;top:885px" width="10" height="8" viewBox="0 0 10 8"><path d="M0 4h3.500M3.500 .8v6.400M3.500 2.200h3.200l.8-.7H10v5H7.500l-.8-.7H3.500z" fill="#222" stroke="#222" stroke-width=".9"/></svg>
<div style="left:1481px;top:921px;width:252px;height:1px;background:#c6c8dc;"></div>
<svg style="left:1711.5px;top:907px" width="10" height="8" viewBox="0 0 10 8"><path d="M0 4h3.500M3.500 .8v6.400M3.500 2.200h3.200l.8-.7H10v5H7.500l-.8-.7H3.500z" fill="#222" stroke="#222" stroke-width=".9"/></svg>
<div style="left:1481px;top:943px;width:252px;height:1px;background:#c6c8dc;"></div>
<svg style="left:1711.5px;top:929px" width="10" height="8" viewBox="0 0 10 8"><path d="M0 4h3.500M3.500 .8v6.400M3.500 2.200h3.200l.8-.7H10v5H7.500l-.8-.7H3.500z" fill="#222" stroke="#222" stroke-width=".9"/></svg>
<div style="left:1481px;top:965px;width:252px;height:1px;background:#c6c8dc;"></div>
<svg style="left:1711.5px;top:951px" width="10" height="8" viewBox="0 0 10 8"><path d="M0 4h3.500M3.500 .8v6.400M3.500 2.200h3.200l.8-.7H10v5H7.500l-.8-.7H3.500z" fill="#222" stroke="#222" stroke-width=".9"/></svg>
<svg style="left:1711.5px;top:973px" width="10" height="8" viewBox="0 0 10 8"><path d="M0 4h3.500M3.500 .8v6.400M3.500 2.200h3.200l.8-.7H10v5H7.500l-.8-.7H3.500z" fill="#222" stroke="#222" stroke-width=".9"/></svg>
<div style="left:1506.4px;top:500px;line-height:14px;white-space:nowrap;letter-spacing:0.07px;">Properties</div>
<div style="left:1489.2px;top:521px;line-height:14px;white-space:nowrap;color:#111;letter-spacing:-0.08px;">Cell</div>
<div style="left:1481.5px;top:546px;line-height:14px;white-space:nowrap;color:#111;letter-spacing:-0.15px;">Pit Model [B_30_75_B01_T05]</div>
<div style="left:1525.3px;top:571px;line-height:14px;white-space:nowrap;font-weight:700;color:#111;letter-spacing:0.39px;">Item</div>
<div style="left:1633.0px;top:571px;line-height:14px;white-space:nowrap;font-weight:700;color:#111;letter-spacing:0.07px;">Value</div>
<div style="left:1484.5px;top:596px;line-height:14px;white-space:nowrap;font-weight:700;color:#1a6fa8;letter-spacing:-0.01px;">stage</div>
<div style="left:1672.8px;top:596px;line-height:14px;white-space:nowrap;font-weight:700;color:#1a6fa8;letter-spacing:0.38px;">3.00</div>
<div style="left:1484.5px;top:618px;line-height:14px;white-space:nowrap;font-weight:700;color:#1a6fa8;letter-spacing:-0.03px;">Toe</div>
<div style="left:1484.5px;top:640px;line-height:14px;white-space:nowrap;font-weight:700;color:#1a6fa8;letter-spacing:-0.49px;">XC</div>
<div style="left:1635.2px;top:640px;line-height:14px;white-space:nowrap;font-weight:700;color:#1a6fa8;letter-spacing:0.39px;">741,082.50</div>
<div style="left:1484.5px;top:662px;line-height:14px;white-space:nowrap;font-weight:700;color:#1a6fa8;letter-spacing:-0.74px;">YC</div>
<div style="left:1625.2px;top:662px;line-height:14px;white-space:nowrap;font-weight:700;color:#1a6fa8;letter-spacing:0.36px;">7,643,272.50</div>
<div style="left:1484.5px;top:684px;line-height:14px;white-space:nowrap;font-weight:700;color:#1a6fa8;letter-spacing:-0.17px;">ZC</div>
<div style="left:1659.2px;top:684px;line-height:14px;white-space:nowrap;font-weight:700;color:#1a6fa8;letter-spacing:0.39px;">157.50</div>
<div style="left:1484.5px;top:706px;line-height:14px;white-space:nowrap;color:#111;letter-spacing:-0.15px;">au</div>
<div style="left:1673.1px;top:706px;line-height:14px;white-space:nowrap;color:#111;letter-spacing:0.28px;">0.00</div>
<div style="left:1484.5px;top:728px;line-height:14px;white-space:nowrap;color:#111;letter-spacing:-0.27px;">au_g</div>
<div style="left:1673.1px;top:728px;line-height:14px;white-space:nowrap;color:#111;letter-spacing:0.28px;">0.00</div>
<div style="left:1484.5px;top:750px;line-height:14px;white-space:nowrap;color:#111;letter-spacing:-0.06px;">au_metal_g</div>
<div style="left:1673.1px;top:750px;line-height:14px;white-space:nowrap;color:#111;letter-spacing:0.28px;">0.00</div>
<div style="left:1484.5px;top:772px;line-height:14px;white-space:nowrap;color:#111;letter-spacing:0.16px;">availability</div>
<div style="left:1673.1px;top:772px;line-height:14px;white-space:nowrap;color:#111;letter-spacing:0.28px;">1.00</div>
<div style="left:1484.5px;top:794px;line-height:14px;white-space:nowrap;color:#111;letter-spacing:0.35px;">batter</div>
<div style="left:1668.1px;top:794px;line-height:14px;white-space:nowrap;color:#111;letter-spacing:-0.16px;">65.00</div>
<div style="left:1484.5px;top:816px;line-height:14px;white-space:nowrap;color:#111;letter-spacing:0.11px;">batter_zone</div>
<div style="left:1683.2px;top:816px;line-height:14px;white-space:nowrap;color:#111;letter-spacing:0.35px;">65</div>
<div style="left:1484.5px;top:838px;line-height:14px;white-space:nowrap;color:#111;letter-spacing:0.17px;">bench</div>
<div style="left:1661.3px;top:838px;line-height:14px;white-space:nowrap;color:#111;letter-spacing:-0.03px;">160.00</div>
<div style="left:1484.5px;top:860px;line-height:14px;white-space:nowrap;color:#111;letter-spacing:0.15px;">block_combo1</div>
<div style="left:1673.1px;top:860px;line-height:14px;white-space:nowrap;color:#111;letter-spacing:0.28px;">0.00</div>
<div style="left:1484.5px;top:882px;line-height:14px;white-space:nowrap;color:#111;letter-spacing:0.03px;">block_value1</div>
<div style="left:1641.3px;top:882px;line-height:14px;white-space:nowrap;color:#111;">-22,500.00</div>
<div style="left:1484.5px;top:904px;line-height:14px;white-space:nowrap;color:#111;letter-spacing:-0.08px;">cu</div>
<div style="left:1673.1px;top:904px;line-height:14px;white-space:nowrap;color:#111;letter-spacing:0.28px;">0.00</div>
<div style="left:1484.5px;top:926px;line-height:14px;white-space:nowrap;color:#111;letter-spacing:-0.19px;">cu_t</div>
<div style="left:1673.1px;top:926px;line-height:14px;white-space:nowrap;color:#111;letter-spacing:0.28px;">0.00</div>
<div style="left:1484.5px;top:948px;line-height:14px;white-space:nowrap;color:#111;letter-spacing:0.15px;">density</div>
<div style="left:1673.1px;top:948px;line-height:14px;white-space:nowrap;color:#111;letter-spacing:0.28px;">2.50</div>
<div style="left:1484.5px;top:970px;line-height:14px;white-space:nowrap;color:#111;letter-spacing:0.08px;">distance</div>
<div style="left:1661.3px;top:970px;line-height:14px;white-space:nowrap;color:#111;letter-spacing:-0.03px;">142.99</div>
</div>
<!--/UI-->

<!--TOOLBAR-->

<!--JOBS-->

<!--VM-->

<!--PROPS-->

<!-- ============ ANNOTATIONS ============ -->
<div class="a" id="annot" style="left:0;top:0;width:1861px;height:995px">
<!-- viewer bracket -->
<div class="g" style="left:87px;top:121px;width:7px;height:607px"></div>
<div class="g" style="left:87px;top:121px;width:21px;height:7px"></div>
<div class="g" style="left:87px;top:721px;width:21px;height:7px"></div>
<div class="lbl" style="left:7px;top:406px;width:81px;height:39px;padding-top:1px">Viewer</div>
<!-- report bracket -->
<div class="g" style="left:85px;top:766px;width:7px;height:221px"></div>
<div class="g" style="left:85px;top:766px;width:21px;height:7px"></div>
<div class="g" style="left:85px;top:979px;width:21px;height:8px"></div>
<div class="lbl" style="left:7px;top:844px;width:79px;height:59px">Report<br>window</div>
<!-- toolbar frame + arrow + label -->
<div style="left:108px;top:81px;width:625px;height:38px;border:4px solid #4f9b38"></div>
<svg style="left:733px;top:88px" width="50" height="24"><path d="M.5 11.6 20.4 1.9v6.7H49v7.1H20.4v6.5z" fill="#4f9b38"/></svg>
<div class="lbl" style="left:782px;top:82px;width:117px;height:36px">Toolbar</div>
<!-- view manager bracket -->
<div class="g" style="left:1770px;top:1px;width:7px;height:488px"></div>
<div class="g" style="left:1755px;top:1px;width:22px;height:7px"></div>
<div class="g" style="left:1755px;top:482px;width:22px;height:7px"></div>
<div class="lbl" style="left:1776px;top:217px;width:80px;height:56px">View<br>Manager</div>
<!-- properties bracket -->
<div class="g" style="left:1770px;top:491px;width:7px;height:495px"></div>
<div class="g" style="left:1755px;top:491px;width:22px;height:7px"></div>
<div class="g" style="left:1755px;top:979px;width:22px;height:7px"></div>
<div class="lbl" style="left:1776px;top:711px;width:80px;height:55px">Properties</div>
</div>


</body></html>
